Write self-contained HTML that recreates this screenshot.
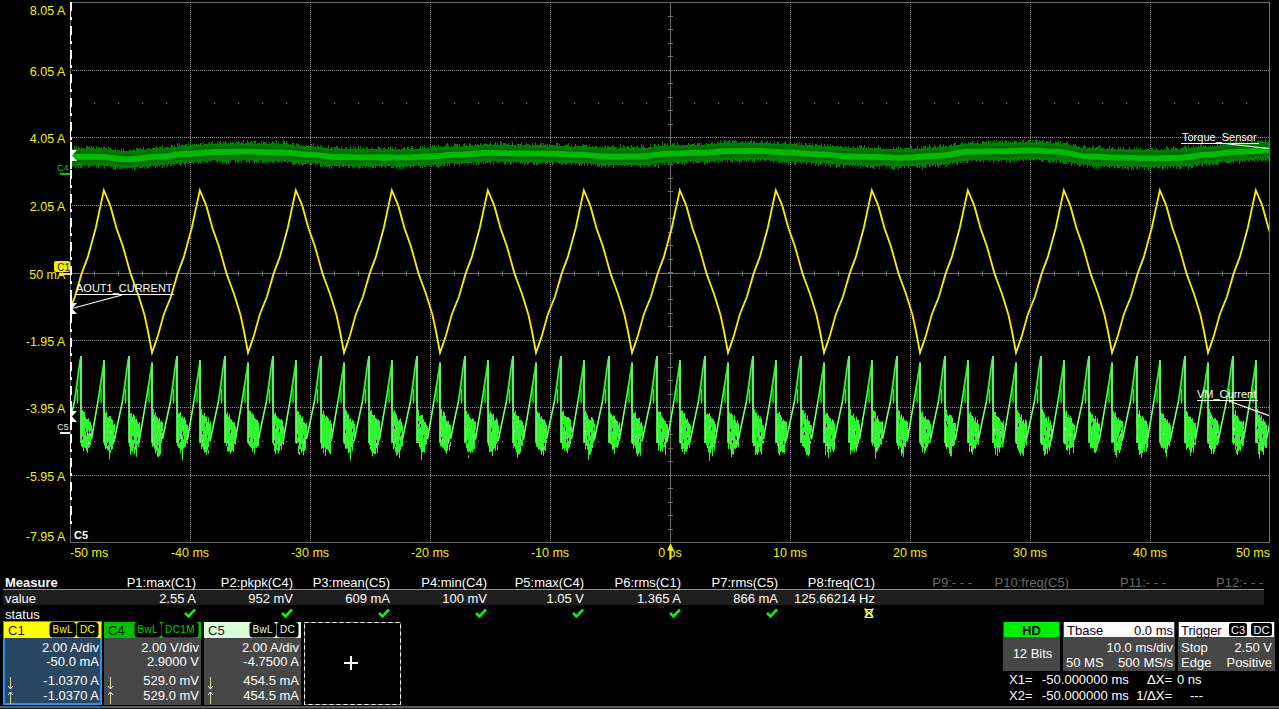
<!DOCTYPE html>
<html><head><meta charset="utf-8"><style>
html,body{margin:0;padding:0;background:#000;width:1279px;height:709px;overflow:hidden}
svg{display:block;font-family:"Liberation Sans", sans-serif}
</style></head><body>
<svg width="1279" height="709" viewBox="0 0 1279 709">
<g shape-rendering="crispEdges"><line x1="190.5" y1="2" x2="190.5" y2="542" stroke="#8c8c8c" stroke-dasharray="1 1"/><line x1="310.5" y1="2" x2="310.5" y2="542" stroke="#8c8c8c" stroke-dasharray="1 1"/><line x1="430.5" y1="2" x2="430.5" y2="542" stroke="#8c8c8c" stroke-dasharray="1 1"/><line x1="550.5" y1="2" x2="550.5" y2="542" stroke="#8c8c8c" stroke-dasharray="1 1"/><line x1="790.5" y1="2" x2="790.5" y2="542" stroke="#8c8c8c" stroke-dasharray="1 1"/><line x1="910.5" y1="2" x2="910.5" y2="542" stroke="#8c8c8c" stroke-dasharray="1 1"/><line x1="1030.5" y1="2" x2="1030.5" y2="542" stroke="#8c8c8c" stroke-dasharray="1 1"/><line x1="1150.5" y1="2" x2="1150.5" y2="542" stroke="#8c8c8c" stroke-dasharray="1 1"/><line x1="70" y1="70.5" x2="1269" y2="70.5" stroke="#8c8c8c" stroke-dasharray="1 1"/><line x1="70" y1="137.5" x2="1269" y2="137.5" stroke="#8c8c8c" stroke-dasharray="1 1"/><line x1="70" y1="205.5" x2="1269" y2="205.5" stroke="#8c8c8c" stroke-dasharray="1 1"/><line x1="70" y1="340.5" x2="1269" y2="340.5" stroke="#8c8c8c" stroke-dasharray="1 1"/><line x1="70" y1="407.5" x2="1269" y2="407.5" stroke="#8c8c8c" stroke-dasharray="1 1"/><line x1="70" y1="475.5" x2="1269" y2="475.5" stroke="#8c8c8c" stroke-dasharray="1 1"/><rect x="94" y="103" width="1" height="1" fill="#8c8c8c"/><rect x="118" y="103" width="1" height="1" fill="#8c8c8c"/><rect x="142" y="103" width="1" height="1" fill="#8c8c8c"/><rect x="166" y="103" width="1" height="1" fill="#8c8c8c"/><rect x="190" y="103" width="1" height="1" fill="#8c8c8c"/><rect x="214" y="103" width="1" height="1" fill="#8c8c8c"/><rect x="238" y="103" width="1" height="1" fill="#8c8c8c"/><rect x="262" y="103" width="1" height="1" fill="#8c8c8c"/><rect x="286" y="103" width="1" height="1" fill="#8c8c8c"/><rect x="310" y="103" width="1" height="1" fill="#8c8c8c"/><rect x="334" y="103" width="1" height="1" fill="#8c8c8c"/><rect x="358" y="103" width="1" height="1" fill="#8c8c8c"/><rect x="382" y="103" width="1" height="1" fill="#8c8c8c"/><rect x="406" y="103" width="1" height="1" fill="#8c8c8c"/><rect x="430" y="103" width="1" height="1" fill="#8c8c8c"/><rect x="454" y="103" width="1" height="1" fill="#8c8c8c"/><rect x="478" y="103" width="1" height="1" fill="#8c8c8c"/><rect x="502" y="103" width="1" height="1" fill="#8c8c8c"/><rect x="526" y="103" width="1" height="1" fill="#8c8c8c"/><rect x="550" y="103" width="1" height="1" fill="#8c8c8c"/><rect x="574" y="103" width="1" height="1" fill="#8c8c8c"/><rect x="598" y="103" width="1" height="1" fill="#8c8c8c"/><rect x="622" y="103" width="1" height="1" fill="#8c8c8c"/><rect x="646" y="103" width="1" height="1" fill="#8c8c8c"/><rect x="670" y="103" width="1" height="1" fill="#8c8c8c"/><rect x="694" y="103" width="1" height="1" fill="#8c8c8c"/><rect x="718" y="103" width="1" height="1" fill="#8c8c8c"/><rect x="742" y="103" width="1" height="1" fill="#8c8c8c"/><rect x="766" y="103" width="1" height="1" fill="#8c8c8c"/><rect x="790" y="103" width="1" height="1" fill="#8c8c8c"/><rect x="814" y="103" width="1" height="1" fill="#8c8c8c"/><rect x="838" y="103" width="1" height="1" fill="#8c8c8c"/><rect x="862" y="103" width="1" height="1" fill="#8c8c8c"/><rect x="886" y="103" width="1" height="1" fill="#8c8c8c"/><rect x="910" y="103" width="1" height="1" fill="#8c8c8c"/><rect x="934" y="103" width="1" height="1" fill="#8c8c8c"/><rect x="958" y="103" width="1" height="1" fill="#8c8c8c"/><rect x="982" y="103" width="1" height="1" fill="#8c8c8c"/><rect x="1006" y="103" width="1" height="1" fill="#8c8c8c"/><rect x="1030" y="103" width="1" height="1" fill="#8c8c8c"/><rect x="1054" y="103" width="1" height="1" fill="#8c8c8c"/><rect x="1078" y="103" width="1" height="1" fill="#8c8c8c"/><rect x="1102" y="103" width="1" height="1" fill="#8c8c8c"/><rect x="1126" y="103" width="1" height="1" fill="#8c8c8c"/><rect x="1150" y="103" width="1" height="1" fill="#8c8c8c"/><rect x="1174" y="103" width="1" height="1" fill="#8c8c8c"/><rect x="1198" y="103" width="1" height="1" fill="#8c8c8c"/><rect x="1222" y="103" width="1" height="1" fill="#8c8c8c"/><rect x="1246" y="103" width="1" height="1" fill="#8c8c8c"/><rect x="94" y="441" width="1" height="1" fill="#8c8c8c"/><rect x="118" y="441" width="1" height="1" fill="#8c8c8c"/><rect x="142" y="441" width="1" height="1" fill="#8c8c8c"/><rect x="166" y="441" width="1" height="1" fill="#8c8c8c"/><rect x="190" y="441" width="1" height="1" fill="#8c8c8c"/><rect x="214" y="441" width="1" height="1" fill="#8c8c8c"/><rect x="238" y="441" width="1" height="1" fill="#8c8c8c"/><rect x="262" y="441" width="1" height="1" fill="#8c8c8c"/><rect x="286" y="441" width="1" height="1" fill="#8c8c8c"/><rect x="310" y="441" width="1" height="1" fill="#8c8c8c"/><rect x="334" y="441" width="1" height="1" fill="#8c8c8c"/><rect x="358" y="441" width="1" height="1" fill="#8c8c8c"/><rect x="382" y="441" width="1" height="1" fill="#8c8c8c"/><rect x="406" y="441" width="1" height="1" fill="#8c8c8c"/><rect x="430" y="441" width="1" height="1" fill="#8c8c8c"/><rect x="454" y="441" width="1" height="1" fill="#8c8c8c"/><rect x="478" y="441" width="1" height="1" fill="#8c8c8c"/><rect x="502" y="441" width="1" height="1" fill="#8c8c8c"/><rect x="526" y="441" width="1" height="1" fill="#8c8c8c"/><rect x="550" y="441" width="1" height="1" fill="#8c8c8c"/><rect x="574" y="441" width="1" height="1" fill="#8c8c8c"/><rect x="598" y="441" width="1" height="1" fill="#8c8c8c"/><rect x="622" y="441" width="1" height="1" fill="#8c8c8c"/><rect x="646" y="441" width="1" height="1" fill="#8c8c8c"/><rect x="670" y="441" width="1" height="1" fill="#8c8c8c"/><rect x="694" y="441" width="1" height="1" fill="#8c8c8c"/><rect x="718" y="441" width="1" height="1" fill="#8c8c8c"/><rect x="742" y="441" width="1" height="1" fill="#8c8c8c"/><rect x="766" y="441" width="1" height="1" fill="#8c8c8c"/><rect x="790" y="441" width="1" height="1" fill="#8c8c8c"/><rect x="814" y="441" width="1" height="1" fill="#8c8c8c"/><rect x="838" y="441" width="1" height="1" fill="#8c8c8c"/><rect x="862" y="441" width="1" height="1" fill="#8c8c8c"/><rect x="886" y="441" width="1" height="1" fill="#8c8c8c"/><rect x="910" y="441" width="1" height="1" fill="#8c8c8c"/><rect x="934" y="441" width="1" height="1" fill="#8c8c8c"/><rect x="958" y="441" width="1" height="1" fill="#8c8c8c"/><rect x="982" y="441" width="1" height="1" fill="#8c8c8c"/><rect x="1006" y="441" width="1" height="1" fill="#8c8c8c"/><rect x="1030" y="441" width="1" height="1" fill="#8c8c8c"/><rect x="1054" y="441" width="1" height="1" fill="#8c8c8c"/><rect x="1078" y="441" width="1" height="1" fill="#8c8c8c"/><rect x="1102" y="441" width="1" height="1" fill="#8c8c8c"/><rect x="1126" y="441" width="1" height="1" fill="#8c8c8c"/><rect x="1150" y="441" width="1" height="1" fill="#8c8c8c"/><rect x="1174" y="441" width="1" height="1" fill="#8c8c8c"/><rect x="1198" y="441" width="1" height="1" fill="#8c8c8c"/><rect x="1222" y="441" width="1" height="1" fill="#8c8c8c"/><rect x="1246" y="441" width="1" height="1" fill="#8c8c8c"/><rect x="670" y="2" width="1" height="540" fill="#6e6e6e"/><rect x="70" y="273" width="1199" height="1" fill="#6e6e6e"/><rect x="94" y="271" width="1" height="5" fill="#6e6e6e"/><rect x="118" y="271" width="1" height="5" fill="#6e6e6e"/><rect x="142" y="271" width="1" height="5" fill="#6e6e6e"/><rect x="166" y="271" width="1" height="5" fill="#6e6e6e"/><rect x="190" y="271" width="1" height="5" fill="#6e6e6e"/><rect x="214" y="271" width="1" height="5" fill="#6e6e6e"/><rect x="238" y="271" width="1" height="5" fill="#6e6e6e"/><rect x="262" y="271" width="1" height="5" fill="#6e6e6e"/><rect x="286" y="271" width="1" height="5" fill="#6e6e6e"/><rect x="310" y="271" width="1" height="5" fill="#6e6e6e"/><rect x="334" y="271" width="1" height="5" fill="#6e6e6e"/><rect x="358" y="271" width="1" height="5" fill="#6e6e6e"/><rect x="382" y="271" width="1" height="5" fill="#6e6e6e"/><rect x="406" y="271" width="1" height="5" fill="#6e6e6e"/><rect x="430" y="271" width="1" height="5" fill="#6e6e6e"/><rect x="454" y="271" width="1" height="5" fill="#6e6e6e"/><rect x="478" y="271" width="1" height="5" fill="#6e6e6e"/><rect x="502" y="271" width="1" height="5" fill="#6e6e6e"/><rect x="526" y="271" width="1" height="5" fill="#6e6e6e"/><rect x="550" y="271" width="1" height="5" fill="#6e6e6e"/><rect x="574" y="271" width="1" height="5" fill="#6e6e6e"/><rect x="598" y="271" width="1" height="5" fill="#6e6e6e"/><rect x="622" y="271" width="1" height="5" fill="#6e6e6e"/><rect x="646" y="271" width="1" height="5" fill="#6e6e6e"/><rect x="670" y="271" width="1" height="5" fill="#6e6e6e"/><rect x="694" y="271" width="1" height="5" fill="#6e6e6e"/><rect x="718" y="271" width="1" height="5" fill="#6e6e6e"/><rect x="742" y="271" width="1" height="5" fill="#6e6e6e"/><rect x="766" y="271" width="1" height="5" fill="#6e6e6e"/><rect x="790" y="271" width="1" height="5" fill="#6e6e6e"/><rect x="814" y="271" width="1" height="5" fill="#6e6e6e"/><rect x="838" y="271" width="1" height="5" fill="#6e6e6e"/><rect x="862" y="271" width="1" height="5" fill="#6e6e6e"/><rect x="886" y="271" width="1" height="5" fill="#6e6e6e"/><rect x="910" y="271" width="1" height="5" fill="#6e6e6e"/><rect x="934" y="271" width="1" height="5" fill="#6e6e6e"/><rect x="958" y="271" width="1" height="5" fill="#6e6e6e"/><rect x="982" y="271" width="1" height="5" fill="#6e6e6e"/><rect x="1006" y="271" width="1" height="5" fill="#6e6e6e"/><rect x="1030" y="271" width="1" height="5" fill="#6e6e6e"/><rect x="1054" y="271" width="1" height="5" fill="#6e6e6e"/><rect x="1078" y="271" width="1" height="5" fill="#6e6e6e"/><rect x="1102" y="271" width="1" height="5" fill="#6e6e6e"/><rect x="1126" y="271" width="1" height="5" fill="#6e6e6e"/><rect x="1150" y="271" width="1" height="5" fill="#6e6e6e"/><rect x="1174" y="271" width="1" height="5" fill="#6e6e6e"/><rect x="1198" y="271" width="1" height="5" fill="#6e6e6e"/><rect x="1222" y="271" width="1" height="5" fill="#6e6e6e"/><rect x="1246" y="271" width="1" height="5" fill="#6e6e6e"/><rect x="668" y="16" width="5" height="1" fill="#6e6e6e"/><rect x="668" y="29" width="5" height="1" fill="#6e6e6e"/><rect x="668" y="43" width="5" height="1" fill="#6e6e6e"/><rect x="668" y="56" width="5" height="1" fill="#6e6e6e"/><rect x="668" y="70" width="5" height="1" fill="#6e6e6e"/><rect x="668" y="83" width="5" height="1" fill="#6e6e6e"/><rect x="668" y="97" width="5" height="1" fill="#6e6e6e"/><rect x="668" y="110" width="5" height="1" fill="#6e6e6e"/><rect x="668" y="124" width="5" height="1" fill="#6e6e6e"/><rect x="668" y="137" width="5" height="1" fill="#6e6e6e"/><rect x="668" y="151" width="5" height="1" fill="#6e6e6e"/><rect x="668" y="164" width="5" height="1" fill="#6e6e6e"/><rect x="668" y="178" width="5" height="1" fill="#6e6e6e"/><rect x="668" y="191" width="5" height="1" fill="#6e6e6e"/><rect x="668" y="205" width="5" height="1" fill="#6e6e6e"/><rect x="668" y="218" width="5" height="1" fill="#6e6e6e"/><rect x="668" y="232" width="5" height="1" fill="#6e6e6e"/><rect x="668" y="245" width="5" height="1" fill="#6e6e6e"/><rect x="668" y="259" width="5" height="1" fill="#6e6e6e"/><rect x="668" y="272" width="5" height="1" fill="#6e6e6e"/><rect x="668" y="286" width="5" height="1" fill="#6e6e6e"/><rect x="668" y="299" width="5" height="1" fill="#6e6e6e"/><rect x="668" y="313" width="5" height="1" fill="#6e6e6e"/><rect x="668" y="326" width="5" height="1" fill="#6e6e6e"/><rect x="668" y="340" width="5" height="1" fill="#6e6e6e"/><rect x="668" y="353" width="5" height="1" fill="#6e6e6e"/><rect x="668" y="367" width="5" height="1" fill="#6e6e6e"/><rect x="668" y="380" width="5" height="1" fill="#6e6e6e"/><rect x="668" y="394" width="5" height="1" fill="#6e6e6e"/><rect x="668" y="407" width="5" height="1" fill="#6e6e6e"/><rect x="668" y="421" width="5" height="1" fill="#6e6e6e"/><rect x="668" y="434" width="5" height="1" fill="#6e6e6e"/><rect x="668" y="448" width="5" height="1" fill="#6e6e6e"/><rect x="668" y="461" width="5" height="1" fill="#6e6e6e"/><rect x="668" y="475" width="5" height="1" fill="#6e6e6e"/><rect x="668" y="488" width="5" height="1" fill="#6e6e6e"/><rect x="668" y="502" width="5" height="1" fill="#6e6e6e"/><rect x="668" y="515" width="5" height="1" fill="#6e6e6e"/><rect x="668" y="529" width="5" height="1" fill="#6e6e6e"/><rect x="70" y="2" width="1200" height="1" fill="#6e6e6e"/><rect x="70" y="542" width="1200" height="1" fill="#6e6e6e"/><rect x="70" y="2" width="1" height="541" fill="#6e6e6e"/><rect x="1269" y="2" width="1" height="541" fill="#6e6e6e"/></g><polygon points="72,149 73,149 73,149 74,149 74,146 75,146 75,148 76,148 76,146 77,146 77,149 78,149 78,147 79,147 79,148 80,148 80,149 81,149 81,147 82,147 82,148 83,148 83,148 84,148 84,149 85,149 85,148 86,148 86,146 87,146 87,146 88,146 88,147 89,147 89,146 90,146 90,148 91,148 91,146 92,146 92,148 93,148 93,147 94,147 94,148 95,148 95,149 96,149 96,146 97,146 97,148 98,148 98,147 99,147 99,147 100,147 100,148 101,148 101,147 102,147 102,149 103,149 103,147 104,147 104,147 105,147 105,147 106,147 106,148 107,148 107,150 108,150 108,147 109,147 109,148 110,148 110,148 111,148 111,149 112,149 112,150 113,150 113,150 114,150 114,150 115,150 115,148 116,148 116,151 117,151 117,150 118,150 118,150 119,150 119,150 120,150 120,151 121,151 121,148 122,148 122,151 123,151 123,149 124,149 124,151 125,151 125,151 126,151 126,151 127,151 127,151 128,151 128,151 129,151 129,150 130,150 130,150 131,150 131,151 132,151 132,149 133,149 133,150 134,150 134,150 135,150 135,151 136,151 136,148 137,148 137,148 138,148 138,149 139,149 139,148 140,148 140,148 141,148 141,149 142,149 142,149 143,149 143,147 144,147 144,150 145,150 145,149 146,149 146,150 147,150 147,148 148,148 148,148 149,148 149,148 150,148 150,149 151,149 151,149 152,149 152,148 153,148 153,148 154,148 154,148 155,148 155,147 156,147 156,146 157,146 157,148 158,148 158,148 159,148 159,147 160,147 160,147 161,147 161,147 162,147 162,145 163,145 163,149 164,149 164,148 165,148 165,147 166,147 166,147 167,147 167,147 168,147 168,147 169,147 169,148 170,148 170,147 171,147 171,145 172,145 172,145 173,145 173,147 174,147 174,145 175,145 175,147 176,147 176,147 177,147 177,143 178,143 178,146 179,146 179,143 180,143 180,146 181,146 181,145 182,145 182,144 183,144 183,145 184,145 184,145 185,145 185,144 186,144 186,144 187,144 187,146 188,146 188,143 189,143 189,146 190,146 190,142 191,142 191,145 192,145 192,144 193,144 193,145 194,145 194,144 195,144 195,145 196,145 196,144 197,144 197,145 198,145 198,144 199,144 199,145 200,145 200,143 201,143 201,143 202,143 202,145 203,145 203,142 204,142 204,144 205,144 205,144 206,144 206,144 207,144 207,144 208,144 208,143 209,143 209,142 210,142 210,144 211,144 211,142 212,142 212,141 213,141 213,144 214,144 214,144 215,144 215,143 216,143 216,144 217,144 217,141 218,141 218,144 219,144 219,142 220,142 220,141 221,141 221,143 222,143 222,144 223,144 223,141 224,141 224,143 225,143 225,141 226,141 226,142 227,142 227,144 228,144 228,143 229,143 229,144 230,144 230,141 231,141 231,143 232,143 232,142 233,142 233,142 234,142 234,144 235,144 235,143 236,143 236,142 237,142 237,142 238,142 238,141 239,141 239,142 240,142 240,143 241,143 241,141 242,141 242,143 243,143 243,140 244,140 244,144 245,144 245,143 246,143 246,143 247,143 247,140 248,140 248,142 249,142 249,143 250,143 250,142 251,142 251,141 252,141 252,142 253,142 253,144 254,144 254,141 255,141 255,141 256,141 256,144 257,144 257,143 258,143 258,143 259,143 259,142 260,142 260,144 261,144 261,141 262,141 262,144 263,144 263,141 264,141 264,142 265,142 265,142 266,142 266,143 267,143 267,144 268,144 268,144 269,144 269,142 270,142 270,144 271,144 271,143 272,143 272,141 273,141 273,142 274,142 274,143 275,143 275,144 276,144 276,140 277,140 277,144 278,144 278,142 279,142 279,144 280,144 280,144 281,144 281,144 282,144 282,144 283,144 283,140 284,140 284,141 285,141 285,143 286,143 286,141 287,141 287,143 288,143 288,144 289,144 289,145 290,145 290,144 291,144 291,145 292,145 292,143 293,143 293,143 294,143 294,145 295,145 295,146 296,146 296,143 297,143 297,144 298,144 298,144 299,144 299,145 300,145 300,146 301,146 301,145 302,145 302,146 303,146 303,145 304,145 304,146 305,146 305,147 306,147 306,145 307,145 307,146 308,146 308,145 309,145 309,146 310,146 310,147 311,147 311,144 312,144 312,146 313,146 313,143 314,143 314,147 315,147 315,146 316,146 316,147 317,147 317,145 318,145 318,146 319,146 319,147 320,147 320,145 321,145 321,147 322,147 322,146 323,146 323,148 324,148 324,148 325,148 325,147 326,147 326,148 327,148 327,148 328,148 328,145 329,145 329,149 330,149 330,149 331,149 331,147 332,147 332,147 333,147 333,149 334,149 334,147 335,147 335,147 336,147 336,146 337,146 337,146 338,146 338,148 339,148 339,148 340,148 340,149 341,149 341,146 342,146 342,148 343,148 343,149 344,149 344,149 345,149 345,147 346,147 346,147 347,147 347,149 348,149 348,149 349,149 349,149 350,149 350,146 351,146 351,149 352,149 352,149 353,149 353,146 354,146 354,148 355,148 355,147 356,147 356,149 357,149 357,149 358,149 358,146 359,146 359,149 360,149 360,146 361,146 361,149 362,149 362,148 363,148 363,149 364,149 364,148 365,148 365,149 366,149 366,147 367,147 367,147 368,147 368,149 369,149 369,149 370,149 370,149 371,149 371,148 372,148 372,147 373,147 373,149 374,149 374,149 375,149 375,149 376,149 376,149 377,149 377,149 378,149 378,146 379,146 379,147 380,147 380,148 381,148 381,149 382,149 382,150 383,150 383,148 384,148 384,147 385,147 385,149 386,149 386,149 387,149 387,149 388,149 388,147 389,147 389,149 390,149 390,146 391,146 391,148 392,148 392,147 393,147 393,149 394,149 394,149 395,149 395,147 396,147 396,150 397,150 397,148 398,148 398,149 399,149 399,149 400,149 400,150 401,150 401,148 402,148 402,149 403,149 403,148 404,148 404,147 405,147 405,149 406,149 406,148 407,148 407,147 408,147 408,147 409,147 409,149 410,149 410,148 411,148 411,146 412,146 412,146 413,146 413,148 414,148 414,149 415,149 415,149 416,149 416,149 417,149 417,149 418,149 418,149 419,149 419,148 420,148 420,146 421,146 421,149 422,149 422,146 423,146 423,148 424,148 424,145 425,145 425,148 426,148 426,148 427,148 427,148 428,148 428,147 429,147 429,149 430,149 430,147 431,147 431,147 432,147 432,145 433,145 433,146 434,146 434,145 435,145 435,147 436,147 436,146 437,146 437,148 438,148 438,145 439,145 439,147 440,147 440,146 441,146 441,147 442,147 442,147 443,147 443,147 444,147 444,146 445,146 445,146 446,146 446,144 447,144 447,143 448,143 448,145 449,145 449,147 450,147 450,147 451,147 451,145 452,145 452,147 453,147 453,146 454,146 454,143 455,143 455,144 456,144 456,144 457,144 457,144 458,144 458,146 459,146 459,144 460,144 460,146 461,146 461,147 462,147 462,146 463,146 463,144 464,144 464,143 465,143 465,146 466,146 466,145 467,145 467,146 468,146 468,146 469,146 469,143 470,143 470,144 471,144 471,145 472,145 472,145 473,145 473,146 474,146 474,145 475,145 475,144 476,144 476,145 477,145 477,144 478,144 478,145 479,145 479,145 480,145 480,143 481,143 481,144 482,144 482,145 483,145 483,144 484,144 484,144 485,144 485,143 486,143 486,144 487,144 487,144 488,144 488,145 489,145 489,144 490,144 490,142 491,142 491,144 492,144 492,145 493,145 493,145 494,145 494,144 495,144 495,142 496,142 496,145 497,145 497,143 498,143 498,145 499,145 499,145 500,145 500,141 501,141 501,142 502,142 502,145 503,145 503,143 504,143 504,143 505,143 505,143 506,143 506,144 507,144 507,144 508,144 508,143 509,143 509,145 510,145 510,145 511,145 511,145 512,145 512,142 513,142 513,145 514,145 514,145 515,145 515,145 516,145 516,146 517,146 517,144 518,144 518,144 519,144 519,144 520,144 520,144 521,144 521,143 522,143 522,145 523,145 523,146 524,146 524,145 525,145 525,145 526,145 526,143 527,143 527,144 528,144 528,144 529,144 529,145 530,145 530,145 531,145 531,146 532,146 532,143 533,143 533,145 534,145 534,145 535,145 535,142 536,142 536,145 537,145 537,145 538,145 538,145 539,145 539,145 540,145 540,143 541,143 541,143 542,143 542,145 543,145 543,143 544,143 544,145 545,145 545,144 546,144 546,145 547,145 547,144 548,144 548,146 549,146 549,144 550,144 550,144 551,144 551,145 552,145 552,145 553,145 553,145 554,145 554,145 555,145 555,146 556,146 556,143 557,143 557,143 558,143 558,146 559,146 559,144 560,144 560,146 561,146 561,146 562,146 562,146 563,146 563,146 564,146 564,146 565,146 565,145 566,145 566,144 567,144 567,145 568,145 568,143 569,143 569,146 570,146 570,147 571,147 571,145 572,145 572,147 573,147 573,147 574,147 574,146 575,146 575,144 576,144 576,146 577,146 577,146 578,146 578,145 579,145 579,146 580,146 580,146 581,146 581,146 582,146 582,145 583,145 583,144 584,144 584,145 585,145 585,145 586,145 586,145 587,145 587,146 588,146 588,147 589,147 589,145 590,145 590,147 591,147 591,147 592,147 592,146 593,146 593,147 594,147 594,147 595,147 595,146 596,146 596,146 597,146 597,147 598,147 598,148 599,148 599,147 600,147 600,147 601,147 601,148 602,148 602,147 603,147 603,148 604,148 604,146 605,146 605,145 606,145 606,148 607,148 607,146 608,146 608,146 609,146 609,147 610,147 610,147 611,147 611,146 612,146 612,146 613,146 613,145 614,145 614,147 615,147 615,147 616,147 616,147 617,147 617,149 618,149 618,148 619,148 619,148 620,148 620,144 621,144 621,148 622,148 622,148 623,148 623,145 624,145 624,146 625,146 625,148 626,148 626,147 627,147 627,146 628,146 628,146 629,146 629,148 630,148 630,148 631,148 631,145 632,145 632,147 633,147 633,147 634,147 634,146 635,146 635,148 636,148 636,146 637,146 637,146 638,146 638,148 639,148 639,148 640,148 640,148 641,148 641,144 642,144 642,147 643,147 643,145 644,145 644,147 645,147 645,148 646,148 646,148 647,148 647,148 648,148 648,147 649,147 649,147 650,147 650,144 651,144 651,147 652,147 652,147 653,147 653,147 654,147 654,144 655,144 655,144 656,144 656,145 657,145 657,147 658,147 658,144 659,144 659,146 660,146 660,146 661,146 661,146 662,146 662,142 663,142 663,146 664,146 664,143 665,143 665,144 666,144 666,145 667,145 667,143 668,143 668,146 669,146 669,146 670,146 670,144 671,144 671,145 672,145 672,143 673,143 673,144 674,144 674,143 675,143 675,145 676,145 676,145 677,145 677,142 678,142 678,145 679,145 679,145 680,145 680,146 681,146 681,145 682,145 682,145 683,145 683,145 684,145 684,145 685,145 685,145 686,145 686,145 687,145 687,145 688,145 688,143 689,143 689,144 690,144 690,145 691,145 691,144 692,144 692,144 693,144 693,144 694,144 694,143 695,143 695,145 696,145 696,145 697,145 697,143 698,143 698,143 699,143 699,143 700,143 700,145 701,145 701,143 702,143 702,145 703,145 703,145 704,145 704,144 705,144 705,145 706,145 706,143 707,143 707,144 708,144 708,144 709,144 709,144 710,144 710,144 711,144 711,142 712,142 712,142 713,142 713,144 714,144 714,143 715,143 715,144 716,144 716,144 717,144 717,142 718,142 718,142 719,142 719,143 720,143 720,140 721,140 721,143 722,143 722,143 723,143 723,143 724,143 724,140 725,140 725,140 726,140 726,142 727,142 727,141 728,141 728,141 729,141 729,140 730,140 730,143 731,143 731,143 732,143 732,140 733,140 733,141 734,141 734,141 735,141 735,140 736,140 736,141 737,141 737,143 738,143 738,143 739,143 739,143 740,143 740,142 741,142 741,141 742,141 742,142 743,142 743,142 744,142 744,143 745,143 745,141 746,141 746,143 747,143 747,142 748,142 748,142 749,142 749,143 750,143 750,141 751,141 751,139 752,139 752,143 753,143 753,141 754,141 754,141 755,141 755,142 756,142 756,143 757,143 757,143 758,143 758,143 759,143 759,143 760,143 760,142 761,142 761,140 762,140 762,142 763,142 763,143 764,143 764,143 765,143 765,142 766,142 766,142 767,142 767,141 768,141 768,143 769,143 769,143 770,143 770,142 771,142 771,144 772,144 772,144 773,144 773,143 774,143 774,141 775,141 775,144 776,144 776,144 777,144 777,141 778,141 778,142 779,142 779,144 780,144 780,144 781,144 781,144 782,144 782,143 783,143 783,143 784,143 784,142 785,142 785,141 786,141 786,144 787,144 787,144 788,144 788,144 789,144 789,143 790,143 790,143 791,143 791,144 792,144 792,144 793,144 793,144 794,144 794,143 795,143 795,144 796,144 796,143 797,143 797,143 798,143 798,145 799,145 799,142 800,142 800,145 801,145 801,143 802,143 802,145 803,145 803,145 804,145 804,146 805,146 805,143 806,143 806,143 807,143 807,145 808,145 808,145 809,145 809,143 810,143 810,145 811,145 811,145 812,145 812,143 813,143 813,145 814,145 814,146 815,146 815,144 816,144 816,144 817,144 817,145 818,145 818,146 819,146 819,145 820,145 820,145 821,145 821,143 822,143 822,147 823,147 823,146 824,146 824,144 825,144 825,146 826,146 826,146 827,146 827,144 828,144 828,146 829,146 829,147 830,147 830,144 831,144 831,147 832,147 832,145 833,145 833,146 834,146 834,147 835,147 835,146 836,146 836,146 837,146 837,146 838,146 838,146 839,146 839,147 840,147 840,146 841,146 841,146 842,146 842,147 843,147 843,148 844,148 844,147 845,147 845,147 846,147 846,146 847,146 847,148 848,148 848,146 849,146 849,148 850,148 850,148 851,148 851,148 852,148 852,148 853,148 853,146 854,146 854,148 855,148 855,148 856,148 856,148 857,148 857,146 858,146 858,148 859,148 859,145 860,145 860,146 861,146 861,145 862,145 862,148 863,148 863,147 864,147 864,145 865,145 865,149 866,149 866,147 867,147 867,149 868,149 868,147 869,147 869,148 870,148 870,148 871,148 871,148 872,148 872,148 873,148 873,149 874,149 874,147 875,147 875,148 876,148 876,148 877,148 877,148 878,148 878,145 879,145 879,148 880,148 880,147 881,147 881,149 882,149 882,149 883,149 883,148 884,148 884,149 885,149 885,149 886,149 886,148 887,148 887,149 888,149 888,149 889,149 889,149 890,149 890,149 891,149 891,149 892,149 892,149 893,149 893,147 894,147 894,149 895,149 895,149 896,149 896,147 897,147 897,149 898,149 898,146 899,146 899,150 900,150 900,147 901,147 901,148 902,148 902,150 903,150 903,149 904,149 904,148 905,148 905,148 906,148 906,148 907,148 907,148 908,148 908,148 909,148 909,148 910,148 910,147 911,147 911,146 912,146 912,149 913,149 913,149 914,149 914,149 915,149 915,148 916,148 916,149 917,149 917,146 918,146 918,149 919,149 919,148 920,148 920,149 921,149 921,146 922,146 922,148 923,148 923,146 924,146 924,146 925,146 925,146 926,146 926,148 927,148 927,147 928,147 928,147 929,147 929,144 930,144 930,146 931,146 931,148 932,148 932,148 933,148 933,147 934,147 934,145 935,145 935,146 936,146 936,148 937,148 937,147 938,147 938,147 939,147 939,145 940,145 940,144 941,144 941,147 942,147 942,146 943,146 943,144 944,144 944,147 945,147 945,146 946,146 946,146 947,146 947,147 948,147 948,146 949,146 949,145 950,145 950,145 951,145 951,144 952,144 952,146 953,146 953,144 954,144 954,143 955,143 955,142 956,142 956,145 957,145 957,145 958,145 958,145 959,145 959,145 960,145 960,144 961,144 961,143 962,143 962,142 963,142 963,144 964,144 964,143 965,143 965,143 966,143 966,144 967,144 967,144 968,144 968,142 969,142 969,143 970,143 970,142 971,142 971,142 972,142 972,142 973,142 973,141 974,141 974,144 975,144 975,143 976,143 976,143 977,143 977,141 978,141 978,143 979,143 979,144 980,144 980,143 981,143 981,144 982,144 982,141 983,141 983,141 984,141 984,142 985,142 985,142 986,142 986,141 987,141 987,144 988,144 988,140 989,140 989,142 990,142 990,141 991,141 991,144 992,144 992,142 993,142 993,141 994,141 994,140 995,140 995,143 996,143 996,140 997,140 997,143 998,143 998,142 999,142 999,141 1000,141 1000,141 1001,141 1001,143 1002,143 1002,140 1003,140 1003,143 1004,143 1004,143 1005,143 1005,140 1006,140 1006,140 1007,140 1007,143 1008,143 1008,141 1009,141 1009,143 1010,143 1010,141 1011,141 1011,143 1012,143 1012,142 1013,142 1013,143 1014,143 1014,140 1015,140 1015,141 1016,141 1016,141 1017,141 1017,143 1018,143 1018,142 1019,142 1019,142 1020,142 1020,142 1021,142 1021,142 1022,142 1022,140 1023,140 1023,140 1024,140 1024,143 1025,143 1025,142 1026,142 1026,142 1027,142 1027,141 1028,141 1028,140 1029,140 1029,140 1030,140 1030,142 1031,142 1031,142 1032,142 1032,140 1033,140 1033,142 1034,142 1034,143 1035,143 1035,140 1036,140 1036,139 1037,139 1037,140 1038,140 1038,142 1039,142 1039,140 1040,140 1040,141 1041,141 1041,141 1042,141 1042,140 1043,140 1043,140 1044,140 1044,143 1045,143 1045,142 1046,142 1046,141 1047,141 1047,141 1048,141 1048,141 1049,141 1049,142 1050,142 1050,140 1051,140 1051,144 1052,144 1052,143 1053,143 1053,143 1054,143 1054,144 1055,144 1055,141 1056,141 1056,142 1057,142 1057,142 1058,142 1058,140 1059,140 1059,144 1060,144 1060,141 1061,141 1061,144 1062,144 1062,144 1063,144 1063,143 1064,143 1064,143 1065,143 1065,143 1066,143 1066,142 1067,142 1067,142 1068,142 1068,144 1069,144 1069,145 1070,145 1070,145 1071,145 1071,146 1072,146 1072,146 1073,146 1073,144 1074,144 1074,145 1075,145 1075,144 1076,144 1076,146 1077,146 1077,147 1078,147 1078,146 1079,146 1079,147 1080,147 1080,148 1081,148 1081,148 1082,148 1082,148 1083,148 1083,146 1084,146 1084,145 1085,145 1085,146 1086,146 1086,149 1087,149 1087,148 1088,148 1088,148 1089,148 1089,147 1090,147 1090,148 1091,148 1091,148 1092,148 1092,147 1093,147 1093,145 1094,145 1094,148 1095,148 1095,148 1096,148 1096,147 1097,147 1097,147 1098,147 1098,146 1099,146 1099,145 1100,145 1100,146 1101,146 1101,149 1102,149 1102,148 1103,148 1103,148 1104,148 1104,149 1105,149 1105,149 1106,149 1106,149 1107,149 1107,148 1108,148 1108,149 1109,149 1109,146 1110,146 1110,149 1111,149 1111,148 1112,148 1112,147 1113,147 1113,148 1114,148 1114,149 1115,149 1115,149 1116,149 1116,150 1117,150 1117,149 1118,149 1118,147 1119,147 1119,149 1120,149 1120,147 1121,147 1121,149 1122,149 1122,149 1123,149 1123,146 1124,146 1124,149 1125,149 1125,150 1126,150 1126,149 1127,149 1127,150 1128,150 1128,149 1129,149 1129,147 1130,147 1130,149 1131,149 1131,149 1132,149 1132,150 1133,150 1133,149 1134,149 1134,148 1135,148 1135,150 1136,150 1136,147 1137,147 1137,150 1138,150 1138,148 1139,148 1139,150 1140,150 1140,148 1141,148 1141,150 1142,150 1142,150 1143,150 1143,150 1144,150 1144,150 1145,150 1145,149 1146,149 1146,150 1147,150 1147,149 1148,149 1148,149 1149,149 1149,150 1150,150 1150,150 1151,150 1151,148 1152,148 1152,148 1153,148 1153,150 1154,150 1154,149 1155,149 1155,150 1156,150 1156,148 1157,148 1157,149 1158,149 1158,150 1159,150 1159,150 1160,150 1160,150 1161,150 1161,149 1162,149 1162,150 1163,150 1163,150 1164,150 1164,149 1165,149 1165,150 1166,150 1166,146 1167,146 1167,147 1168,147 1168,148 1169,148 1169,150 1170,150 1170,150 1171,150 1171,148 1172,148 1172,148 1173,148 1173,146 1174,146 1174,149 1175,149 1175,147 1176,147 1176,148 1177,148 1177,148 1178,148 1178,150 1179,150 1179,149 1180,149 1180,149 1181,149 1181,148 1182,148 1182,148 1183,148 1183,147 1184,147 1184,146 1185,146 1185,145 1186,145 1186,147 1187,147 1187,149 1188,149 1188,145 1189,145 1189,148 1190,148 1190,148 1191,148 1191,147 1192,147 1192,148 1193,148 1193,145 1194,145 1194,148 1195,148 1195,146 1196,146 1196,147 1197,147 1197,147 1198,147 1198,145 1199,145 1199,147 1200,147 1200,143 1201,143 1201,144 1202,144 1202,147 1203,147 1203,145 1204,145 1204,147 1205,147 1205,145 1206,145 1206,146 1207,146 1207,147 1208,147 1208,146 1209,146 1209,147 1210,147 1210,146 1211,146 1211,147 1212,147 1212,145 1213,145 1213,147 1214,147 1214,146 1215,146 1215,146 1216,146 1216,146 1217,146 1217,144 1218,144 1218,146 1219,146 1219,145 1220,145 1220,143 1221,143 1221,145 1222,145 1222,144 1223,144 1223,143 1224,143 1224,145 1225,145 1225,142 1226,142 1226,145 1227,145 1227,145 1228,145 1228,142 1229,142 1229,144 1230,144 1230,141 1231,141 1231,144 1232,144 1232,143 1233,143 1233,142 1234,142 1234,144 1235,144 1235,140 1236,140 1236,141 1237,141 1237,142 1238,142 1238,143 1239,143 1239,142 1240,142 1240,140 1241,140 1241,142 1242,142 1242,144 1243,144 1243,142 1244,142 1244,143 1245,143 1245,143 1246,143 1246,143 1247,143 1247,139 1248,139 1248,143 1249,143 1249,143 1250,143 1250,143 1251,143 1251,141 1252,141 1252,140 1253,140 1253,142 1254,142 1254,142 1255,142 1255,142 1256,142 1256,143 1257,143 1257,141 1258,141 1258,140 1259,140 1259,141 1260,141 1260,141 1261,141 1261,140 1262,140 1262,141 1263,141 1263,142 1264,142 1264,142 1265,142 1265,139 1266,139 1266,142 1267,142 1267,142 1268,142 1268,140 1269,140 1269,161 1268,161 1268,159 1267,159 1267,161 1266,161 1266,161 1265,161 1265,158 1264,158 1264,160 1263,160 1263,161 1262,161 1262,161 1261,161 1261,159 1260,159 1260,160 1259,160 1259,159 1258,159 1258,162 1257,162 1257,159 1256,159 1256,159 1255,159 1255,162 1254,162 1254,160 1253,160 1253,161 1252,161 1252,160 1251,160 1251,160 1250,160 1250,161 1249,161 1249,162 1248,162 1248,160 1247,160 1247,160 1246,160 1246,161 1245,161 1245,162 1244,162 1244,161 1243,161 1243,162 1242,162 1242,160 1241,160 1241,162 1240,162 1240,164 1239,164 1239,160 1238,160 1238,161 1237,161 1237,161 1236,161 1236,161 1235,161 1235,161 1234,161 1234,164 1233,164 1233,162 1232,162 1232,162 1231,162 1231,163 1230,163 1230,163 1229,163 1229,163 1228,163 1228,164 1227,164 1227,163 1226,163 1226,162 1225,162 1225,162 1224,162 1224,161 1223,161 1223,162 1222,162 1222,162 1221,162 1221,162 1220,162 1220,162 1219,162 1219,165 1218,165 1218,165 1217,165 1217,165 1216,165 1216,165 1215,165 1215,164 1214,164 1214,166 1213,166 1213,165 1212,165 1212,163 1211,163 1211,165 1210,165 1210,166 1209,166 1209,165 1208,165 1208,163 1207,163 1207,166 1206,166 1206,164 1205,164 1205,164 1204,164 1204,163 1203,163 1203,166 1202,166 1202,166 1201,166 1201,163 1200,163 1200,165 1199,165 1199,165 1198,165 1198,166 1197,166 1197,167 1196,167 1196,165 1195,165 1195,164 1194,164 1194,167 1193,167 1193,168 1192,168 1192,168 1191,168 1191,167 1190,167 1190,166 1189,166 1189,170 1188,170 1188,166 1187,166 1187,167 1186,167 1186,167 1185,167 1185,166 1184,166 1184,167 1183,167 1183,166 1182,166 1182,168 1181,168 1181,169 1180,169 1180,169 1179,169 1179,167 1178,167 1178,167 1177,167 1177,169 1176,169 1176,166 1175,166 1175,166 1174,166 1174,168 1173,168 1173,167 1172,167 1172,166 1171,166 1171,168 1170,168 1170,166 1169,166 1169,167 1168,167 1168,169 1167,169 1167,166 1166,166 1166,169 1165,169 1165,168 1164,168 1164,169 1163,169 1163,170 1162,170 1162,166 1161,166 1161,167 1160,167 1160,168 1159,168 1159,169 1158,169 1158,168 1157,168 1157,167 1156,167 1156,167 1155,167 1155,168 1154,168 1154,168 1153,168 1153,167 1152,167 1152,168 1151,168 1151,168 1150,168 1150,167 1149,167 1149,171 1148,171 1148,169 1147,169 1147,167 1146,167 1146,167 1145,167 1145,170 1144,170 1144,167 1143,167 1143,168 1142,168 1142,167 1141,167 1141,167 1140,167 1140,169 1139,169 1139,166 1138,166 1138,170 1137,170 1137,169 1136,169 1136,167 1135,167 1135,166 1134,166 1134,170 1133,170 1133,168 1132,168 1132,170 1131,170 1131,167 1130,167 1130,167 1129,167 1129,170 1128,170 1128,169 1127,169 1127,166 1126,166 1126,169 1125,169 1125,168 1124,168 1124,166 1123,166 1123,169 1122,169 1122,166 1121,166 1121,167 1120,167 1120,168 1119,168 1119,168 1118,168 1118,168 1117,168 1117,166 1116,166 1116,168 1115,168 1115,169 1114,169 1114,166 1113,166 1113,166 1112,166 1112,167 1111,167 1111,166 1110,166 1110,168 1109,168 1109,167 1108,167 1108,167 1107,167 1107,166 1106,166 1106,166 1105,166 1105,167 1104,167 1104,167 1103,167 1103,166 1102,166 1102,166 1101,166 1101,169 1100,169 1100,166 1099,166 1099,168 1098,168 1098,166 1097,166 1097,169 1096,169 1096,166 1095,166 1095,167 1094,167 1094,168 1093,168 1093,167 1092,167 1092,165 1091,165 1091,166 1090,166 1090,166 1089,166 1089,165 1088,165 1088,168 1087,168 1087,165 1086,165 1086,165 1085,165 1085,165 1084,165 1084,166 1083,166 1083,164 1082,164 1082,165 1081,165 1081,166 1080,166 1080,167 1079,167 1079,165 1078,165 1078,165 1077,165 1077,163 1076,163 1076,163 1075,163 1075,164 1074,164 1074,163 1073,163 1073,164 1072,164 1072,166 1071,166 1071,162 1070,162 1070,162 1069,162 1069,164 1068,164 1068,161 1067,161 1067,164 1066,164 1066,164 1065,164 1065,164 1064,164 1064,164 1063,164 1063,163 1062,163 1062,161 1061,161 1061,163 1060,163 1060,161 1059,161 1059,160 1058,160 1058,160 1057,160 1057,163 1056,163 1056,160 1055,160 1055,161 1054,161 1054,162 1053,162 1053,163 1052,163 1052,160 1051,160 1051,163 1050,163 1050,163 1049,163 1049,162 1048,162 1048,160 1047,160 1047,160 1046,160 1046,160 1045,160 1045,160 1044,160 1044,161 1043,161 1043,162 1042,162 1042,162 1041,162 1041,160 1040,160 1040,160 1039,160 1039,159 1038,159 1038,159 1037,159 1037,160 1036,160 1036,159 1035,159 1035,160 1034,160 1034,161 1033,161 1033,160 1032,160 1032,160 1031,160 1031,161 1030,161 1030,160 1029,160 1029,160 1028,160 1028,159 1027,159 1027,161 1026,161 1026,160 1025,160 1025,159 1024,159 1024,162 1023,162 1023,160 1022,160 1022,160 1021,160 1021,159 1020,159 1020,161 1019,161 1019,160 1018,160 1018,161 1017,161 1017,161 1016,161 1016,159 1015,159 1015,162 1014,162 1014,160 1013,160 1013,161 1012,161 1012,160 1011,160 1011,163 1010,163 1010,162 1009,162 1009,160 1008,160 1008,160 1007,160 1007,163 1006,163 1006,160 1005,160 1005,160 1004,160 1004,160 1003,160 1003,160 1002,160 1002,161 1001,161 1001,160 1000,160 1000,162 999,162 999,161 998,161 998,160 997,160 997,161 996,161 996,160 995,160 995,161 994,161 994,163 993,163 993,160 992,160 992,160 991,160 991,161 990,161 990,161 989,161 989,161 988,161 988,160 987,160 987,160 986,160 986,161 985,161 985,160 984,160 984,163 983,163 983,160 982,160 982,161 981,161 981,162 980,162 980,162 979,162 979,160 978,160 978,161 977,161 977,162 976,162 976,161 975,161 975,160 974,160 974,160 973,160 973,161 972,161 972,161 971,161 971,160 970,160 970,160 969,160 969,161 968,161 968,163 967,163 967,163 966,163 966,161 965,161 965,161 964,161 964,163 963,163 963,161 962,161 962,161 961,161 961,163 960,163 960,161 959,161 959,162 958,162 958,165 957,165 957,164 956,164 956,162 955,162 955,163 954,163 954,163 953,163 953,164 952,164 952,162 951,162 951,163 950,163 950,164 949,164 949,165 948,165 948,164 947,164 947,167 946,167 946,164 945,164 945,165 944,165 944,165 943,165 943,164 942,164 942,165 941,165 941,166 940,166 940,166 939,166 939,168 938,168 938,166 937,166 937,164 936,164 936,167 935,167 935,164 934,164 934,165 933,165 933,166 932,166 932,165 931,165 931,167 930,167 930,167 929,167 929,164 928,164 928,164 927,164 927,165 926,165 926,168 925,168 925,168 924,168 924,167 923,167 923,170 922,170 922,167 921,167 921,166 920,166 920,168 919,168 919,165 918,165 918,168 917,168 917,167 916,167 916,166 915,166 915,166 914,166 914,166 913,166 913,166 912,166 912,166 911,166 911,167 910,167 910,166 909,166 909,168 908,168 908,166 907,166 907,166 906,166 906,166 905,166 905,168 904,168 904,166 903,166 903,166 902,166 902,167 901,167 901,168 900,168 900,168 899,168 899,170 898,170 898,166 897,166 897,168 896,168 896,167 895,167 895,170 894,170 894,170 893,170 893,169 892,169 892,169 891,169 891,166 890,166 890,167 889,167 889,166 888,166 888,166 887,166 887,169 886,169 886,166 885,166 885,165 884,165 884,165 883,165 883,166 882,166 882,166 881,166 881,166 880,166 880,169 879,169 879,166 878,166 878,167 877,167 877,166 876,166 876,166 875,166 875,167 874,167 874,169 873,169 873,168 872,168 872,167 871,167 871,168 870,168 870,165 869,165 869,166 868,166 868,168 867,168 867,167 866,167 866,167 865,167 865,165 864,165 864,167 863,167 863,166 862,166 862,166 861,166 861,169 860,169 860,165 859,165 859,166 858,166 858,167 857,167 857,165 856,165 856,166 855,166 855,166 854,166 854,165 853,165 853,167 852,167 852,166 851,166 851,165 850,165 850,166 849,166 849,165 848,165 848,165 847,165 847,165 846,165 846,166 845,166 845,166 844,166 844,169 843,169 843,164 842,164 842,164 841,164 841,165 840,165 840,167 839,167 839,167 838,167 838,167 837,167 837,168 836,168 836,164 835,164 835,164 834,164 834,164 833,164 833,165 832,165 832,164 831,164 831,167 830,167 830,163 829,163 829,166 828,166 828,164 827,164 827,164 826,164 826,166 825,166 825,163 824,163 824,163 823,163 823,164 822,164 822,165 821,165 821,165 820,165 820,164 819,164 819,166 818,166 818,162 817,162 817,164 816,164 816,166 815,166 815,163 814,163 814,164 813,164 813,163 812,163 812,165 811,165 811,162 810,162 810,163 809,163 809,162 808,162 808,163 807,163 807,165 806,165 806,162 805,162 805,162 804,162 804,164 803,164 803,162 802,162 802,164 801,164 801,163 800,163 800,161 799,161 799,163 798,163 798,162 797,162 797,162 796,162 796,165 795,165 795,165 794,165 794,161 793,161 793,161 792,161 792,161 791,161 791,161 790,161 790,161 789,161 789,165 788,165 788,163 787,163 787,163 786,163 786,161 785,161 785,163 784,163 784,161 783,161 783,163 782,163 782,163 781,163 781,162 780,162 780,163 779,163 779,163 778,163 778,161 777,161 777,161 776,161 776,161 775,161 775,161 774,161 774,163 773,163 773,161 772,161 772,161 771,161 771,161 770,161 770,160 769,160 769,160 768,160 768,160 767,160 767,160 766,160 766,162 765,162 765,161 764,161 764,160 763,160 763,159 762,159 762,160 761,160 761,161 760,161 760,159 759,159 759,161 758,161 758,160 757,160 757,159 756,159 756,160 755,160 755,163 754,163 754,160 753,160 753,162 752,162 752,159 751,159 751,159 750,159 750,161 749,161 749,162 748,162 748,160 747,160 747,162 746,162 746,160 745,160 745,161 744,161 744,160 743,160 743,160 742,160 742,162 741,162 741,162 740,162 740,164 739,164 739,161 738,161 738,162 737,162 737,161 736,161 736,162 735,162 735,160 734,160 734,159 733,159 733,163 732,163 732,162 731,162 731,162 730,162 730,160 729,160 729,160 728,160 728,163 727,163 727,160 726,160 726,162 725,162 725,160 724,160 724,160 723,160 723,162 722,162 722,162 721,162 721,161 720,161 720,160 719,160 719,163 718,163 718,160 717,160 717,161 716,161 716,161 715,161 715,162 714,162 714,162 713,162 713,161 712,161 712,162 711,162 711,161 710,161 710,163 709,163 709,161 708,161 708,163 707,163 707,163 706,163 706,163 705,163 705,165 704,165 704,162 703,162 703,162 702,162 702,161 701,161 701,162 700,162 700,163 699,163 699,163 698,163 698,163 697,163 697,163 696,163 696,162 695,162 695,161 694,161 694,164 693,164 693,161 692,161 692,162 691,162 691,162 690,162 690,161 689,161 689,161 688,161 688,163 687,163 687,164 686,164 686,162 685,162 685,165 684,165 684,162 683,162 683,164 682,164 682,164 681,164 681,162 680,162 680,163 679,163 679,164 678,164 678,164 677,164 677,164 676,164 676,163 675,163 675,163 674,163 674,164 673,164 673,162 672,162 672,164 671,164 671,165 670,165 670,165 669,165 669,164 668,164 668,163 667,163 667,162 666,162 666,163 665,163 665,165 664,165 664,163 663,163 663,165 662,165 662,163 661,163 661,163 660,163 660,163 659,163 659,168 658,168 658,163 657,163 657,165 656,165 656,167 655,167 655,167 654,167 654,164 653,164 653,164 652,164 652,166 651,166 651,165 650,165 650,166 649,166 649,167 648,167 648,166 647,166 647,165 646,165 646,165 645,165 645,167 644,167 644,165 643,165 643,165 642,165 642,165 641,165 641,168 640,168 640,166 639,166 639,166 638,166 638,166 637,166 637,165 636,165 636,165 635,165 635,165 634,165 634,165 633,165 633,166 632,166 632,167 631,167 631,165 630,165 630,165 629,165 629,165 628,165 628,166 627,166 627,166 626,166 626,165 625,165 625,166 624,166 624,165 623,165 623,165 622,165 622,166 621,166 621,165 620,165 620,165 619,165 619,166 618,166 618,165 617,165 617,165 616,165 616,165 615,165 615,165 614,165 614,168 613,168 613,165 612,165 612,165 611,165 611,165 610,165 610,166 609,166 609,167 608,167 608,165 607,165 607,165 606,165 606,167 605,167 605,166 604,166 604,167 603,167 603,166 602,166 602,168 601,168 601,165 600,165 600,167 599,167 599,166 598,166 598,167 597,167 597,164 596,164 596,165 595,165 595,164 594,164 594,165 593,165 593,164 592,164 592,166 591,166 591,164 590,164 590,163 589,163 589,164 588,164 588,166 587,166 587,163 586,163 586,163 585,163 585,166 584,166 584,163 583,163 583,164 582,164 582,166 581,166 581,164 580,164 580,166 579,166 579,164 578,164 578,163 577,163 577,164 576,164 576,165 575,165 575,163 574,163 574,163 573,163 573,163 572,163 572,165 571,165 571,163 570,163 570,164 569,164 569,163 568,163 568,164 567,164 567,164 566,164 566,165 565,165 565,163 564,163 564,164 563,164 563,165 562,165 562,165 561,165 561,163 560,163 560,164 559,164 559,163 558,163 558,163 557,163 557,162 556,162 556,163 555,163 555,162 554,162 554,164 553,164 553,166 552,166 552,162 551,162 551,163 550,163 550,163 549,163 549,162 548,162 548,164 547,164 547,163 546,163 546,164 545,164 545,163 544,163 544,162 543,162 543,163 542,163 542,164 541,164 541,163 540,163 540,164 539,164 539,164 538,164 538,165 537,165 537,165 536,165 536,163 535,163 535,165 534,165 534,165 533,165 533,162 532,162 532,163 531,163 531,162 530,162 530,163 529,163 529,164 528,164 528,165 527,165 527,162 526,162 526,164 525,164 525,165 524,165 524,162 523,162 523,164 522,164 522,163 521,163 521,164 520,164 520,163 519,163 519,162 518,162 518,162 517,162 517,163 516,163 516,162 515,162 515,162 514,162 514,164 513,164 513,162 512,162 512,164 511,164 511,165 510,165 510,162 509,162 509,162 508,162 508,164 507,164 507,162 506,162 506,164 505,164 505,165 504,165 504,162 503,162 503,162 502,162 502,162 501,162 501,162 500,162 500,162 499,162 499,164 498,164 498,163 497,163 497,162 496,162 496,161 495,161 495,161 494,161 494,165 493,165 493,162 492,162 492,162 491,162 491,164 490,164 490,163 489,163 489,162 488,162 488,163 487,163 487,163 486,163 486,164 485,164 485,161 484,161 484,164 483,164 483,162 482,162 482,163 481,163 481,162 480,162 480,164 479,164 479,165 478,165 478,163 477,163 477,165 476,165 476,162 475,162 475,163 474,163 474,165 473,165 473,162 472,162 472,164 471,164 471,163 470,163 470,163 469,163 469,165 468,165 468,163 467,163 467,163 466,163 466,163 465,163 465,163 464,163 464,163 463,163 463,164 462,164 462,164 461,164 461,163 460,163 460,166 459,166 459,164 458,164 458,165 457,165 457,164 456,164 456,164 455,164 455,166 454,166 454,164 453,164 453,163 452,163 452,163 451,163 451,163 450,163 450,166 449,166 449,164 448,164 448,166 447,166 447,163 446,163 446,164 445,164 445,166 444,166 444,166 443,166 443,165 442,165 442,166 441,166 441,166 440,166 440,167 439,167 439,168 438,168 438,167 437,167 437,167 436,167 436,165 435,165 435,165 434,165 434,166 433,166 433,165 432,165 432,167 431,167 431,165 430,165 430,166 429,166 429,165 428,165 428,165 427,165 427,165 426,165 426,167 425,167 425,167 424,167 424,165 423,165 423,168 422,168 422,166 421,166 421,168 420,168 420,166 419,166 419,166 418,166 418,165 417,165 417,166 416,166 416,166 415,166 415,166 414,166 414,167 413,167 413,166 412,166 412,167 411,167 411,168 410,168 410,166 409,166 409,166 408,166 408,167 407,167 407,167 406,167 406,166 405,166 405,167 404,167 404,168 403,168 403,169 402,169 402,166 401,166 401,169 400,169 400,169 399,169 399,167 398,167 398,167 397,167 397,169 396,169 396,167 395,167 395,166 394,166 394,168 393,168 393,168 392,168 392,168 391,168 391,166 390,166 390,166 389,166 389,166 388,166 388,166 387,166 387,166 386,166 386,168 385,168 385,167 384,167 384,166 383,166 383,167 382,167 382,168 381,168 381,166 380,166 380,167 379,167 379,166 378,166 378,166 377,166 377,166 376,166 376,168 375,168 375,166 374,166 374,168 373,168 373,168 372,168 372,167 371,167 371,167 370,167 370,167 369,167 369,167 368,167 368,166 367,166 367,167 366,167 366,168 365,168 365,166 364,166 364,166 363,166 363,168 362,168 362,166 361,166 361,168 360,168 360,169 359,169 359,168 358,168 358,166 357,166 357,167 356,167 356,166 355,166 355,168 354,168 354,167 353,167 353,168 352,168 352,166 351,166 351,166 350,166 350,168 349,168 349,168 348,168 348,166 347,166 347,166 346,166 346,166 345,166 345,166 344,166 344,167 343,167 343,167 342,167 342,166 341,166 341,166 340,166 340,168 339,168 339,166 338,166 338,166 337,166 337,166 336,166 336,166 335,166 335,166 334,166 334,165 333,165 333,166 332,166 332,169 331,169 331,166 330,166 330,169 329,169 329,167 328,167 328,167 327,167 327,167 326,167 326,166 325,166 325,167 324,167 324,164 323,164 323,167 322,167 322,167 321,167 321,167 320,167 320,164 319,164 319,163 318,163 318,165 317,165 317,164 316,164 316,166 315,166 315,163 314,163 314,163 313,163 313,164 312,164 312,165 311,165 311,164 310,164 310,165 309,165 309,163 308,163 308,164 307,164 307,164 306,164 306,164 305,164 305,164 304,164 304,165 303,165 303,166 302,166 302,165 301,165 301,163 300,163 300,166 299,166 299,164 298,164 298,162 297,162 297,164 296,164 296,164 295,164 295,165 294,165 294,165 293,165 293,165 292,165 292,162 291,162 291,162 290,162 290,162 289,162 289,162 288,162 288,163 287,163 287,161 286,161 286,162 285,162 285,162 284,162 284,161 283,161 283,161 282,161 282,163 281,163 281,161 280,161 280,162 279,162 279,162 278,162 278,163 277,163 277,161 276,161 276,161 275,161 275,162 274,162 274,164 273,164 273,163 272,163 272,162 271,162 271,162 270,162 270,161 269,161 269,163 268,163 268,161 267,161 267,163 266,163 266,161 265,161 265,163 264,163 264,163 263,163 263,163 262,163 262,160 261,160 261,160 260,160 260,161 259,161 259,163 258,163 258,162 257,162 257,163 256,163 256,162 255,162 255,164 254,164 254,162 253,162 253,160 252,160 252,161 251,161 251,160 250,160 250,163 249,163 249,162 248,162 248,162 247,162 247,163 246,163 246,160 245,160 245,161 244,161 244,160 243,160 243,160 242,160 242,163 241,163 241,161 240,161 240,161 239,161 239,163 238,163 238,163 237,163 237,161 236,161 236,163 235,163 235,160 234,160 234,160 233,160 233,160 232,160 232,160 231,160 231,162 230,162 230,163 229,163 229,164 228,164 228,162 227,162 227,164 226,164 226,162 225,162 225,163 224,163 224,162 223,162 223,164 222,164 222,160 221,160 221,162 220,162 220,161 219,161 219,161 218,161 218,163 217,163 217,162 216,162 216,160 215,160 215,161 214,161 214,160 213,160 213,160 212,160 212,161 211,161 211,162 210,162 210,161 209,161 209,161 208,161 208,163 207,163 207,162 206,162 206,162 205,162 205,163 204,163 204,161 203,161 203,161 202,161 202,162 201,162 201,164 200,164 200,163 199,163 199,164 198,164 198,162 197,162 197,163 196,163 196,162 195,162 195,162 194,162 194,164 193,164 193,163 192,163 192,163 191,163 191,162 190,162 190,163 189,163 189,162 188,162 188,164 187,164 187,163 186,163 186,167 185,167 185,165 184,165 184,163 183,163 183,162 182,162 182,165 181,165 181,166 180,166 180,165 179,165 179,163 178,163 178,164 177,164 177,164 176,164 176,164 175,164 175,165 174,165 174,166 173,166 173,164 172,164 172,166 171,166 171,166 170,166 170,164 169,164 169,164 168,164 168,167 167,167 167,165 166,165 166,164 165,164 165,167 164,167 164,165 163,165 163,168 162,168 162,165 161,165 161,165 160,165 160,167 159,167 159,165 158,165 158,167 157,167 157,166 156,166 156,168 155,168 155,166 154,166 154,167 153,167 153,165 152,165 152,166 151,166 151,167 150,167 150,167 149,167 149,168 148,168 148,168 147,168 147,167 146,167 146,166 145,166 145,169 144,169 144,167 143,167 143,168 142,168 142,168 141,168 141,168 140,168 140,168 139,168 139,167 138,167 138,169 137,169 137,167 136,167 136,169 135,169 135,171 134,171 134,168 133,168 133,169 132,169 132,168 131,168 131,168 130,168 130,168 129,168 129,168 128,168 128,168 127,168 127,169 126,169 126,168 125,168 125,168 124,168 124,168 123,168 123,168 122,168 122,169 121,169 121,169 120,169 120,169 119,169 119,167 118,167 118,168 117,168 117,167 116,167 116,170 115,170 115,169 114,169 114,170 113,170 113,167 112,167 112,167 111,167 111,168 110,168 110,166 109,166 109,166 108,166 108,167 107,167 107,166 106,166 106,166 105,166 105,169 104,169 104,166 103,166 103,165 102,165 102,165 101,165 101,167 100,167 100,166 99,166 99,168 98,168 98,166 97,166 97,168 96,168 96,165 95,165 95,165 94,165 94,167 93,167 93,166 92,166 92,166 91,166 91,166 90,166 90,167 89,167 89,168 88,168 88,165 87,165 87,165 86,165 86,166 85,166 85,166 84,166 84,165 83,165 83,167 82,167 82,168 81,168 81,168 80,168 80,165 79,165 79,168 78,168 78,166 77,166 77,167 76,167 76,169 75,169 75,166 74,166 74,167 73,167 73,167 72,167" fill="#007e00" shape-rendering="crispEdges"/><polygon points="72,151.3 76,151.3 80,151.3 84,151.3 88,151.3 92,151.3 96,151.3 100,151.3 104,151.5 108,151.9 112,152.4 116,152.9 120,153.4 124,153.6 128,153.7 132,153.5 136,153.2 140,152.7 144,152.2 148,151.7 152,151.3 156,151.1 160,151.0 164,150.8 168,150.3 172,149.7 176,149.1 180,148.6 184,148.3 188,148.2 192,148.1 196,147.8 200,147.4 204,147.1 208,146.7 212,146.5 216,146.4 220,146.4 224,146.3 228,146.3 232,146.2 236,146.1 240,146.1 244,146.1 248,146.1 252,146.2 256,146.3 260,146.4 264,146.5 268,146.6 272,146.7 276,146.7 280,146.7 284,146.9 288,147.2 292,147.6 296,148.1 300,148.5 304,148.8 308,149.0 312,149.0 316,149.3 320,149.8 324,150.3 328,150.8 332,151.2 336,151.4 340,151.4 344,151.4 348,151.5 352,151.6 356,151.7 360,151.7 364,151.8 368,151.8 372,151.8 376,151.8 380,151.9 384,151.9 388,151.9 392,152.0 396,152.0 400,152.0 404,151.9 408,151.7 412,151.5 416,151.2 420,151.0 424,150.9 428,150.8 432,150.7 436,150.5 440,150.2 444,149.8 448,149.4 452,149.2 456,149.0 460,149.0 464,148.8 468,148.5 472,148.2 476,147.8 480,147.5 484,147.3 488,147.3 492,147.3 496,147.4 500,147.5 504,147.6 508,147.7 512,147.8 516,147.9 520,147.9 524,147.9 528,147.9 532,148.0 536,148.0 540,148.1 544,148.1 548,148.1 552,148.1 556,148.2 560,148.4 564,148.6 568,148.8 572,148.9 576,149.0 580,149.0 584,149.2 588,149.5 592,149.8 596,150.2 600,150.5 604,150.7 608,150.8 612,150.8 616,150.8 620,150.8 624,150.8 628,150.8 632,150.8 636,150.8 640,150.7 644,150.5 648,150.1 652,149.6 656,149.1 660,148.6 664,148.3 668,148.1 672,148.1 676,148.0 680,147.9 684,147.7 688,147.5 692,147.4 696,147.3 700,147.3 704,147.2 708,146.9 712,146.5 716,146.2 720,145.8 724,145.6 728,145.5 732,145.5 736,145.5 740,145.4 744,145.4 748,145.3 752,145.3 756,145.3 760,145.3 764,145.5 768,145.7 772,146.0 776,146.3 780,146.5 784,146.7 788,146.7 792,146.8 796,147.1 800,147.4 804,147.8 808,148.1 812,148.5 816,148.6 820,148.7 824,148.8 828,149.1 832,149.5 836,150.0 840,150.4 844,150.7 848,150.8 852,150.8 856,150.9 860,151.0 864,151.1 868,151.2 872,151.3 876,151.4 880,151.4 884,151.5 888,151.8 892,152.0 896,152.2 900,152.2 904,152.1 908,151.9 912,151.7 916,151.4 920,151.0 924,150.7 928,150.5 932,150.3 936,150.2 940,150.1 944,149.7 948,149.1 952,148.4 956,147.6 960,146.9 964,146.4 968,146.1 972,146.1 976,146.1 980,146.0 984,145.9 988,145.8 992,145.8 996,145.7 1000,145.7 1004,145.6 1008,145.5 1012,145.4 1016,145.2 1020,145.0 1024,144.9 1028,144.9 1032,145.0 1036,145.1 1040,145.3 1044,145.6 1048,145.8 1052,146.0 1056,146.1 1060,146.2 1064,146.6 1068,147.4 1072,148.4 1076,149.4 1080,150.2 1084,150.7 1088,150.8 1092,150.9 1096,151.0 1100,151.2 1104,151.4 1108,151.7 1112,151.9 1116,152.0 1120,152.0 1124,152.0 1128,152.2 1132,152.3 1136,152.5 1140,152.6 1144,152.7 1148,152.8 1152,152.8 1156,152.7 1160,152.6 1164,152.5 1168,152.4 1172,152.3 1176,152.2 1180,152.2 1184,151.9 1188,151.4 1192,150.7 1196,150.1 1200,149.5 1204,149.1 1208,149.0 1212,148.8 1216,148.5 1220,148.0 1224,147.4 1228,146.9 1232,146.5 1236,146.3 1240,146.3 1244,146.1 1248,145.8 1252,145.4 1256,145.0 1260,144.7 1264,144.4 1268,144.3 1268,144.3 1269,155.5 1269,155.5 1265,155.6 1261,155.9 1257,156.2 1253,156.6 1249,157.0 1245,157.3 1241,157.5 1237,157.5 1233,157.7 1229,158.1 1225,158.6 1221,159.2 1217,159.7 1213,160.0 1209,160.2 1205,160.3 1201,160.7 1197,161.3 1193,161.9 1189,162.6 1185,163.1 1181,163.4 1177,163.4 1173,163.5 1169,163.6 1165,163.7 1161,163.8 1157,163.9 1153,164.0 1149,164.0 1145,163.9 1141,163.8 1137,163.7 1133,163.5 1129,163.4 1125,163.2 1121,163.2 1117,163.2 1113,163.1 1109,162.9 1105,162.6 1101,162.4 1097,162.2 1093,162.1 1089,162.0 1085,161.9 1081,161.4 1077,160.6 1073,159.6 1069,158.6 1065,157.8 1061,157.4 1057,157.3 1053,157.2 1049,157.0 1045,156.8 1041,156.5 1037,156.3 1033,156.2 1029,156.1 1025,156.1 1021,156.2 1017,156.4 1013,156.6 1009,156.7 1005,156.8 1001,156.9 997,156.9 993,157.0 989,157.0 985,157.1 981,157.2 977,157.3 973,157.3 969,157.3 965,157.6 961,158.1 957,158.8 953,159.6 949,160.3 945,160.9 941,161.3 937,161.4 933,161.5 929,161.7 925,161.9 921,162.2 917,162.6 913,162.9 909,163.1 905,163.3 901,163.4 897,163.4 893,163.2 889,163.0 885,162.7 881,162.6 877,162.6 873,162.5 869,162.4 865,162.3 861,162.2 857,162.1 853,162.0 849,162.0 845,161.9 841,161.6 837,161.2 833,160.7 829,160.3 825,160.0 821,159.9 817,159.8 813,159.7 809,159.3 805,159.0 801,158.6 797,158.3 793,158.0 789,157.9 785,157.9 781,157.7 777,157.5 773,157.2 769,156.9 765,156.7 761,156.5 757,156.5 753,156.5 749,156.5 745,156.6 741,156.6 737,156.7 733,156.7 729,156.7 725,156.8 721,157.0 717,157.4 713,157.7 709,158.1 705,158.4 701,158.5 697,158.5 693,158.6 689,158.7 685,158.9 681,159.1 677,159.2 673,159.3 669,159.3 665,159.5 661,159.8 657,160.3 653,160.8 649,161.3 645,161.7 641,161.9 637,162.0 633,162.0 629,162.0 625,162.0 621,162.0 617,162.0 613,162.0 609,162.0 605,161.9 601,161.7 597,161.4 593,161.0 589,160.7 585,160.4 581,160.2 577,160.2 573,160.1 569,160.0 565,159.8 561,159.6 557,159.4 553,159.3 549,159.3 545,159.3 541,159.3 537,159.2 533,159.2 529,159.1 525,159.1 521,159.1 517,159.1 513,159.0 509,158.9 505,158.8 501,158.7 497,158.6 493,158.5 489,158.5 485,158.5 481,158.7 477,159.0 473,159.4 469,159.7 465,160.0 461,160.2 457,160.2 453,160.4 449,160.6 445,161.0 441,161.4 437,161.7 433,161.9 429,162.0 425,162.1 421,162.2 417,162.4 413,162.7 409,162.9 405,163.1 401,163.2 397,163.2 393,163.2 389,163.1 385,163.1 381,163.1 377,163.0 373,163.0 369,163.0 365,163.0 361,162.9 357,162.9 353,162.8 349,162.7 345,162.6 341,162.6 337,162.6 333,162.4 329,162.0 325,161.5 321,161.0 317,160.5 313,160.2 309,160.2 305,160.0 301,159.7 297,159.3 293,158.8 289,158.4 285,158.1 281,157.9 277,157.9 273,157.9 269,157.8 265,157.7 261,157.6 257,157.5 253,157.4 249,157.3 245,157.3 241,157.3 237,157.3 233,157.4 229,157.5 225,157.5 221,157.6 217,157.6 213,157.7 209,157.9 205,158.3 201,158.6 197,159.0 193,159.3 189,159.4 185,159.5 181,159.8 177,160.3 173,160.9 169,161.5 165,162.0 161,162.2 157,162.3 153,162.5 149,162.9 145,163.4 141,163.9 137,164.4 133,164.7 129,164.9 125,164.8 121,164.6 117,164.1 113,163.6 109,163.1 105,162.7 101,162.5 97,162.5 93,162.5 89,162.5 85,162.5 81,162.5 77,162.5 73,162.5" fill="#006c00"/><polygon points="72,154.0 76,154.0 80,154.0 84,154.0 88,154.0 92,154.0 96,154.0 100,154.0 104,154.2 108,154.6 112,155.1 116,155.6 120,156.1 124,156.3 128,156.4 132,156.2 136,155.9 140,155.4 144,154.9 148,154.4 152,154.0 156,153.8 160,153.7 164,153.5 168,153.0 172,152.4 176,151.8 180,151.3 184,151.0 188,150.9 192,150.8 196,150.5 200,150.1 204,149.8 208,149.4 212,149.2 216,149.1 220,149.1 224,149.0 228,149.0 232,148.9 236,148.8 240,148.8 244,148.8 248,148.8 252,148.9 256,149.0 260,149.1 264,149.2 268,149.3 272,149.4 276,149.4 280,149.4 284,149.6 288,149.9 292,150.3 296,150.8 300,151.2 304,151.5 308,151.7 312,151.7 316,152.0 320,152.5 324,153.0 328,153.5 332,153.9 336,154.1 340,154.1 344,154.1 348,154.2 352,154.3 356,154.4 360,154.4 364,154.5 368,154.5 372,154.5 376,154.5 380,154.6 384,154.6 388,154.6 392,154.7 396,154.7 400,154.7 404,154.6 408,154.4 412,154.2 416,153.9 420,153.7 424,153.6 428,153.5 432,153.4 436,153.2 440,152.9 444,152.5 448,152.1 452,151.9 456,151.7 460,151.7 464,151.5 468,151.2 472,150.9 476,150.5 480,150.2 484,150.0 488,150.0 492,150.0 496,150.1 500,150.2 504,150.3 508,150.4 512,150.5 516,150.6 520,150.6 524,150.6 528,150.6 532,150.7 536,150.7 540,150.8 544,150.8 548,150.8 552,150.8 556,150.9 560,151.1 564,151.3 568,151.5 572,151.6 576,151.7 580,151.7 584,151.9 588,152.2 592,152.5 596,152.9 600,153.2 604,153.4 608,153.5 612,153.5 616,153.5 620,153.5 624,153.5 628,153.5 632,153.5 636,153.5 640,153.4 644,153.2 648,152.8 652,152.3 656,151.8 660,151.3 664,151.0 668,150.8 672,150.8 676,150.7 680,150.6 684,150.4 688,150.2 692,150.1 696,150.0 700,150.0 704,149.9 708,149.6 712,149.2 716,148.9 720,148.5 724,148.3 728,148.2 732,148.2 736,148.2 740,148.1 744,148.1 748,148.0 752,148.0 756,148.0 760,148.0 764,148.2 768,148.4 772,148.7 776,149.0 780,149.2 784,149.4 788,149.4 792,149.5 796,149.8 800,150.1 804,150.5 808,150.8 812,151.2 816,151.3 820,151.4 824,151.5 828,151.8 832,152.2 836,152.7 840,153.1 844,153.4 848,153.5 852,153.5 856,153.6 860,153.7 864,153.8 868,153.9 872,154.0 876,154.1 880,154.1 884,154.2 888,154.5 892,154.7 896,154.9 900,154.9 904,154.8 908,154.6 912,154.4 916,154.1 920,153.7 924,153.4 928,153.2 932,153.0 936,152.9 940,152.8 944,152.4 948,151.8 952,151.1 956,150.3 960,149.6 964,149.1 968,148.8 972,148.8 976,148.8 980,148.7 984,148.6 988,148.5 992,148.5 996,148.4 1000,148.4 1004,148.3 1008,148.2 1012,148.1 1016,147.9 1020,147.7 1024,147.6 1028,147.6 1032,147.7 1036,147.8 1040,148.0 1044,148.3 1048,148.5 1052,148.7 1056,148.8 1060,148.9 1064,149.3 1068,150.1 1072,151.1 1076,152.1 1080,152.9 1084,153.4 1088,153.5 1092,153.6 1096,153.7 1100,153.9 1104,154.1 1108,154.4 1112,154.6 1116,154.7 1120,154.7 1124,154.7 1128,154.9 1132,155.0 1136,155.2 1140,155.3 1144,155.4 1148,155.5 1152,155.5 1156,155.4 1160,155.3 1164,155.2 1168,155.1 1172,155.0 1176,154.9 1180,154.9 1184,154.6 1188,154.1 1192,153.4 1196,152.8 1200,152.2 1204,151.8 1208,151.7 1212,151.5 1216,151.2 1220,150.7 1224,150.1 1228,149.6 1232,149.2 1236,149.0 1240,149.0 1244,148.8 1248,148.5 1252,148.1 1256,147.7 1260,147.4 1264,147.1 1268,147.0 1268,147.0 1269,152.8 1269,152.8 1265,152.9 1261,153.2 1257,153.5 1253,153.9 1249,154.3 1245,154.6 1241,154.8 1237,154.8 1233,155.0 1229,155.4 1225,155.9 1221,156.5 1217,157.0 1213,157.3 1209,157.5 1205,157.6 1201,158.0 1197,158.6 1193,159.2 1189,159.9 1185,160.4 1181,160.7 1177,160.7 1173,160.8 1169,160.9 1165,161.0 1161,161.1 1157,161.2 1153,161.3 1149,161.3 1145,161.2 1141,161.1 1137,161.0 1133,160.8 1129,160.7 1125,160.5 1121,160.5 1117,160.5 1113,160.4 1109,160.2 1105,159.9 1101,159.7 1097,159.5 1093,159.4 1089,159.3 1085,159.2 1081,158.7 1077,157.9 1073,156.9 1069,155.9 1065,155.1 1061,154.7 1057,154.6 1053,154.5 1049,154.3 1045,154.1 1041,153.8 1037,153.6 1033,153.5 1029,153.4 1025,153.4 1021,153.5 1017,153.7 1013,153.9 1009,154.0 1005,154.1 1001,154.2 997,154.2 993,154.3 989,154.3 985,154.4 981,154.5 977,154.6 973,154.6 969,154.6 965,154.9 961,155.4 957,156.1 953,156.9 949,157.6 945,158.2 941,158.6 937,158.7 933,158.8 929,159.0 925,159.2 921,159.5 917,159.9 913,160.2 909,160.4 905,160.6 901,160.7 897,160.7 893,160.5 889,160.3 885,160.0 881,159.9 877,159.9 873,159.8 869,159.7 865,159.6 861,159.5 857,159.4 853,159.3 849,159.3 845,159.2 841,158.9 837,158.5 833,158.0 829,157.6 825,157.3 821,157.2 817,157.1 813,157.0 809,156.6 805,156.3 801,155.9 797,155.6 793,155.3 789,155.2 785,155.2 781,155.0 777,154.8 773,154.5 769,154.2 765,154.0 761,153.8 757,153.8 753,153.8 749,153.8 745,153.9 741,153.9 737,154.0 733,154.0 729,154.0 725,154.1 721,154.3 717,154.7 713,155.0 709,155.4 705,155.7 701,155.8 697,155.8 693,155.9 689,156.0 685,156.2 681,156.4 677,156.5 673,156.6 669,156.6 665,156.8 661,157.1 657,157.6 653,158.1 649,158.6 645,159.0 641,159.2 637,159.3 633,159.3 629,159.3 625,159.3 621,159.3 617,159.3 613,159.3 609,159.3 605,159.2 601,159.0 597,158.7 593,158.3 589,158.0 585,157.7 581,157.5 577,157.5 573,157.4 569,157.3 565,157.1 561,156.9 557,156.7 553,156.6 549,156.6 545,156.6 541,156.6 537,156.5 533,156.5 529,156.4 525,156.4 521,156.4 517,156.4 513,156.3 509,156.2 505,156.1 501,156.0 497,155.9 493,155.8 489,155.8 485,155.8 481,156.0 477,156.3 473,156.7 469,157.0 465,157.3 461,157.5 457,157.5 453,157.7 449,157.9 445,158.3 441,158.7 437,159.0 433,159.2 429,159.3 425,159.4 421,159.5 417,159.7 413,160.0 409,160.2 405,160.4 401,160.5 397,160.5 393,160.5 389,160.4 385,160.4 381,160.4 377,160.3 373,160.3 369,160.3 365,160.3 361,160.2 357,160.2 353,160.1 349,160.0 345,159.9 341,159.9 337,159.9 333,159.7 329,159.3 325,158.8 321,158.3 317,157.8 313,157.5 309,157.5 305,157.3 301,157.0 297,156.6 293,156.1 289,155.7 285,155.4 281,155.2 277,155.2 273,155.2 269,155.1 265,155.0 261,154.9 257,154.8 253,154.7 249,154.6 245,154.6 241,154.6 237,154.6 233,154.7 229,154.8 225,154.8 221,154.9 217,154.9 213,155.0 209,155.2 205,155.6 201,155.9 197,156.3 193,156.6 189,156.7 185,156.8 181,157.1 177,157.6 173,158.2 169,158.8 165,159.3 161,159.5 157,159.6 153,159.8 149,160.2 145,160.7 141,161.2 137,161.7 133,162.0 129,162.2 125,162.1 121,161.9 117,161.4 113,160.9 109,160.4 105,160.0 101,159.8 97,159.8 93,159.8 89,159.8 85,159.8 81,159.8 77,159.8 73,159.8" fill="#00bc00"/><svg x="0" y="0" width="1279" height="709"><clipPath id="pc"><rect x="72" y="3" width="1197" height="539"/></clipPath><polyline clip-path="url(#pc)" points="-40.0,352.6 -34.6,337.4 -28.2,314.5 -21.1,296.8 -14.3,273.4 -7.9,256.1 -0.3,228.2 7.8,190.2 14.2,205.4 20.5,228.2 26.8,246.0 34.5,273.4 42.1,294.2 48.4,314.5 52.2,332.3 56.0,352.6 56.0,352.6 61.4,337.4 67.8,314.5 74.9,296.8 81.7,273.4 88.1,256.1 95.7,228.2 103.8,190.2 110.2,205.4 116.5,228.2 122.8,246.0 130.5,273.4 138.1,294.2 144.4,314.5 148.2,332.3 152.0,352.6 152.0,352.6 157.4,337.4 163.8,314.5 170.9,296.8 177.7,273.4 184.1,256.1 191.7,228.2 199.8,190.2 206.2,205.4 212.5,228.2 218.8,246.0 226.5,273.4 234.1,294.2 240.4,314.5 244.2,332.3 248.0,352.6 248.0,352.6 253.4,337.4 259.8,314.5 266.9,296.8 273.7,273.4 280.1,256.1 287.7,228.2 295.8,190.2 302.2,205.4 308.5,228.2 314.8,246.0 322.5,273.4 330.1,294.2 336.4,314.5 340.2,332.3 344.0,352.6 344.0,352.6 349.4,337.4 355.8,314.5 362.9,296.8 369.7,273.4 376.1,256.1 383.7,228.2 391.8,190.2 398.2,205.4 404.5,228.2 410.8,246.0 418.5,273.4 426.1,294.2 432.4,314.5 436.2,332.3 440.0,352.6 440.0,352.6 445.4,337.4 451.8,314.5 458.9,296.8 465.7,273.4 472.1,256.1 479.7,228.2 487.8,190.2 494.2,205.4 500.5,228.2 506.8,246.0 514.5,273.4 522.1,294.2 528.4,314.5 532.2,332.3 536.0,352.6 536.0,352.6 541.4,337.4 547.8,314.5 554.9,296.8 561.7,273.4 568.1,256.1 575.7,228.2 583.8,190.2 590.2,205.4 596.5,228.2 602.8,246.0 610.5,273.4 618.1,294.2 624.4,314.5 628.2,332.3 632.0,352.6 632.0,352.6 637.4,337.4 643.8,314.5 650.9,296.8 657.7,273.4 664.1,256.1 671.7,228.2 679.8,190.2 686.2,205.4 692.5,228.2 698.8,246.0 706.5,273.4 714.1,294.2 720.4,314.5 724.2,332.3 728.0,352.6 728.0,352.6 733.4,337.4 739.8,314.5 746.9,296.8 753.7,273.4 760.1,256.1 767.7,228.2 775.8,190.2 782.2,205.4 788.5,228.2 794.8,246.0 802.5,273.4 810.1,294.2 816.4,314.5 820.2,332.3 824.0,352.6 824.0,352.6 829.4,337.4 835.8,314.5 842.9,296.8 849.7,273.4 856.1,256.1 863.7,228.2 871.8,190.2 878.2,205.4 884.5,228.2 890.8,246.0 898.5,273.4 906.1,294.2 912.4,314.5 916.2,332.3 920.0,352.6 920.0,352.6 925.4,337.4 931.8,314.5 938.9,296.8 945.7,273.4 952.1,256.1 959.7,228.2 967.8,190.2 974.2,205.4 980.5,228.2 986.8,246.0 994.5,273.4 1002.1,294.2 1008.4,314.5 1012.2,332.3 1016.0,352.6 1016.0,352.6 1021.4,337.4 1027.8,314.5 1034.9,296.8 1041.7,273.4 1048.1,256.1 1055.7,228.2 1063.8,190.2 1070.2,205.4 1076.5,228.2 1082.8,246.0 1090.5,273.4 1098.1,294.2 1104.4,314.5 1108.2,332.3 1112.0,352.6 1112.0,352.6 1117.4,337.4 1123.8,314.5 1130.9,296.8 1137.7,273.4 1144.1,256.1 1151.7,228.2 1159.8,190.2 1166.2,205.4 1172.5,228.2 1178.8,246.0 1186.5,273.4 1194.1,294.2 1200.4,314.5 1204.2,332.3 1208.0,352.6 1208.0,352.6 1213.4,337.4 1219.8,314.5 1226.9,296.8 1233.7,273.4 1240.1,256.1 1247.7,228.2 1255.8,190.2 1262.2,205.4 1268.5,228.2 1274.8,246.0 1282.5,273.4 1290.1,294.2 1296.4,314.5 1300.2,332.3 1304.0,352.6 1304.0,352.6 1309.4,337.4 1315.8,314.5 1322.9,296.8 1329.7,273.4 1336.1,256.1 1343.7,228.2 1351.8,190.2 1358.2,205.4 1364.5,228.2 1370.8,246.0 1378.5,273.4 1386.1,294.2 1392.4,314.5 1396.2,332.3 1400.0,352.6" fill="none" stroke="#f0f000" stroke-width="1.85" stroke-linejoin="miter"/></svg><svg x="0" y="0" width="1279" height="709"><clipPath id="pc5"><rect x="72" y="3" width="1197" height="539"/></clipPath><g clip-path="url(#pc5)"><path d="M26.0,401 L32.0,364 L32.0,401Z M49.5,401 L55.5,370.5 L55.5,401Z M74.0,401 L80.0,364 L80.0,401Z M97.5,401 L103.5,368 L103.5,401Z M122.0,401 L128.0,364 L128.0,401Z M145.5,401 L151.5,370.5 L151.5,401Z M170.0,401 L176.0,364 L176.0,401Z M193.5,401 L199.5,368 L199.5,401Z M218.0,401 L224.0,364 L224.0,401Z M241.5,401 L247.5,370.5 L247.5,401Z M266.0,401 L272.0,364 L272.0,401Z M289.5,401 L295.5,368 L295.5,401Z M314.0,401 L320.0,364 L320.0,401Z M337.5,401 L343.5,370.5 L343.5,401Z M362.0,401 L368.0,364 L368.0,401Z M385.5,401 L391.5,368 L391.5,401Z M410.0,401 L416.0,364 L416.0,401Z M433.5,401 L439.5,370.5 L439.5,401Z M458.0,401 L464.0,364 L464.0,401Z M481.5,401 L487.5,368 L487.5,401Z M506.0,401 L512.0,364 L512.0,401Z M529.5,401 L535.5,370.5 L535.5,401Z M554.0,401 L560.0,364 L560.0,401Z M577.5,401 L583.5,368 L583.5,401Z M602.0,401 L608.0,364 L608.0,401Z M625.5,401 L631.5,370.5 L631.5,401Z M650.0,401 L656.0,364 L656.0,401Z M673.5,401 L679.5,368 L679.5,401Z M698.0,401 L704.0,364 L704.0,401Z M721.5,401 L727.5,370.5 L727.5,401Z M746.0,401 L752.0,364 L752.0,401Z M769.5,401 L775.5,368 L775.5,401Z M794.0,401 L800.0,364 L800.0,401Z M817.5,401 L823.5,370.5 L823.5,401Z M842.0,401 L848.0,364 L848.0,401Z M865.5,401 L871.5,368 L871.5,401Z M890.0,401 L896.0,364 L896.0,401Z M913.5,401 L919.5,370.5 L919.5,401Z M938.0,401 L944.0,364 L944.0,401Z M961.5,401 L967.5,368 L967.5,401Z M986.0,401 L992.0,364 L992.0,401Z M1009.5,401 L1015.5,370.5 L1015.5,401Z M1034.0,401 L1040.0,364 L1040.0,401Z M1057.5,401 L1063.5,368 L1063.5,401Z M1082.0,401 L1088.0,364 L1088.0,401Z M1105.5,401 L1111.5,370.5 L1111.5,401Z M1130.0,401 L1136.0,364 L1136.0,401Z M1153.5,401 L1159.5,368 L1159.5,401Z M1178.0,401 L1184.0,364 L1184.0,401Z M1201.5,401 L1207.5,370.5 L1207.5,401Z M1226.0,401 L1232.0,364 L1232.0,401Z M1249.5,401 L1255.5,368 L1255.5,401Z M1274.0,401 L1280.0,364 L1280.0,401Z" fill="#30f830" fill-opacity="0.35"/><path d="M8.5,410.7V445.2 M9.5,413.5V446.6 M10.5,410.5V447.3 M11.5,415.2V453.3 M12.5,417.1V455.1 M13.5,419.2V453.3 M14.5,421.1V450.5 M15.5,417.4V432.1M15.5,435.1V446.5 M16.5,423.4V446.8 M17.5,420.4V443.4 M18.5,423.3V440.5 M29.5,389V403 M33.5,407.4V444.6 M34.5,414.4V448.5 M35.5,411.5V454.1 M36.5,413.6V447.5 M37.5,413.2V452.0 M38.5,414.1V446.4M38.5,449.4V454.1 M39.5,420.5V449.1 M40.5,420.1V448.3 M41.5,423.2V435.5M41.5,438.5V447.9 M42.5,423.4V448.0 M43.5,423.5V432.5M43.5,435.5V443.2 M53.0,389V403 M56.5,407.7V450.6 M57.5,410.0V447.6 M58.5,415.6V433.9M58.5,436.9V450.5 M59.5,413.3V457.2 M60.5,412.6V449.7 M61.5,416.2V430.5M61.5,433.5V451.8 M62.5,416.9V442.1M62.5,445.1V452.3 M63.5,417.3V444.9M63.5,447.9V451.7 M64.5,419.1V443.9 M65.5,423.6V445.7 M66.5,425.8V440.4 M77.5,389V403 M81.5,410.7V437.6M81.5,440.6V446.4 M82.5,410.1V436.4M82.5,439.4V447.5 M83.5,411.7V451.6 M84.5,412.2V447.5 M85.5,417.0V428.3M85.5,431.3V448.4 M86.5,419.0V432.3M86.5,435.3V450.8 M87.5,419.4V452.9 M88.5,418.2V430.4M88.5,433.4V448.0 M89.5,421.5V447.3 M90.5,421.7V431.2M90.5,434.2V445.2 M91.5,424.9V439.3 M101.0,389V403 M104.5,409.6V445.7 M105.5,413.0V449.1 M106.5,411.6V448.1 M107.5,416.8V442.9M107.5,445.9V450.1 M108.5,417.7V442.0M108.5,445.0V450.7 M109.5,416.0V459.5 M110.5,416.3V446.9M110.5,449.9V453.0 M111.5,418.9V450.0 M112.5,419.9V449.2 M113.5,424.9V444.2 M114.5,423.8V432.3M114.5,435.3V442.0 M125.5,389V403 M129.5,410.0V417.8M129.5,420.8V446.6 M130.5,413.3V454.8 M131.5,413.1V450.7 M132.5,416.7V436.4M132.5,439.4V452.5 M133.5,413.8V436.7M133.5,439.7V448.1 M134.5,415.5V443.6M134.5,446.6V454.0 M135.5,419.4V449.8 M136.5,418.8V456.8 M137.5,421.5V437.4M137.5,440.4V444.6 M138.5,424.2V446.7 M139.5,422.1V443.3 M149.0,389V403 M152.5,412.2V446.7 M153.5,408.8V446.5 M154.5,414.6V448.9 M155.5,412.5V453.4 M156.5,416.3V450.9 M157.5,417.4V456.6 M158.5,419.5V445.2M158.5,448.2V457.1 M159.5,417.9V456.0 M160.5,421.9V454.6 M161.5,420.9V442.7 M162.5,422.2V429.5M162.5,432.5V438.3 M173.5,389V403 M177.5,408.0V445.9 M178.5,413.2V447.7 M179.5,413.3V440.2M179.5,443.2V448.3 M180.5,411.8V438.9M180.5,441.9V453.2 M181.5,417.5V450.2 M182.5,416.4V431.6M182.5,434.6V460.4 M183.5,418.3V436.2M183.5,439.2V448.6 M184.5,417.2V447.5 M185.5,419.7V446.7 M186.5,424.3V442.7 M187.5,424.9V437.7M187.5,440.7V443.5 M197.0,389V403 M200.5,411.6V442.0 M201.5,408.9V449.2 M202.5,414.8V431.2M202.5,434.2V447.1 M203.5,415.3V449.7 M204.5,413.0V452.7 M205.5,416.4V423.6M205.5,426.6V452.1 M206.5,416.7V454.6 M207.5,421.8V435.2M207.5,438.2V450.6 M208.5,417.7V447.2M208.5,450.2V453.8 M209.5,423.4V441.6 M210.5,421.2V435.2M210.5,438.2V441.8 M221.5,389V403 M225.5,408.9V441.5 M226.5,413.9V446.2 M227.5,411.9V443.6M227.5,446.6V451.3 M228.5,416.5V451.6 M229.5,413.7V451.7 M230.5,418.7V430.1M230.5,433.1V453.6 M231.5,419.6V451.9 M232.5,421.9V450.5 M233.5,422.2V452.0 M234.5,422.4V443.8 M235.5,426.1V444.5 M245.0,389V403 M248.5,410.9V444.4 M249.5,410.3V437.9M249.5,440.9V445.9 M250.5,411.3V446.8 M251.5,413.5V448.4 M252.5,413.2V451.9 M253.5,414.7V438.7M253.5,441.7V448.4 M254.5,417.9V453.6 M255.5,418.9V447.7 M256.5,419.8V447.9 M257.5,420.1V446.3 M258.5,422.3V446.5 M269.5,389V403 M273.5,409.4V423.0M273.5,426.0V444.8 M274.5,414.0V440.2M274.5,443.2V451.2 M275.5,412.5V425.4M275.5,428.4V454.3 M276.5,415.8V449.6 M277.5,417.9V444.8M277.5,447.8V450.7 M278.5,417.9V453.3 M279.5,419.3V429.2M279.5,432.2V450.6 M280.5,419.7V446.0 M281.5,419.0V449.7 M282.5,420.7V443.7 M283.5,425.6V434.0M283.5,437.0V445.0 M293.0,389V403 M296.5,412.2V438.0M296.5,441.0V443.9 M297.5,410.6V434.4M297.5,437.4V443.0 M298.5,412.0V442.5M298.5,445.5V453.7 M299.5,415.1V449.0M299.5,452.0V454.9 M300.5,414.6V449.1 M301.5,417.6V444.2M301.5,447.2V452.6 M302.5,416.6V451.0 M303.5,421.8V435.1M303.5,438.1V455.4 M304.5,422.4V451.1 M305.5,423.8V449.4 M306.5,422.7V439.1 M317.5,389V403 M321.5,409.7V449.0 M322.5,414.1V448.0 M323.5,410.6V453.2 M324.5,414.4V447.5 M325.5,417.8V455.8 M326.5,415.9V449.0 M327.5,417.1V449.6 M328.5,418.5V450.8 M329.5,421.0V452.9 M330.5,420.2V454.1 M331.5,423.5V435.2M331.5,438.2V441.1 M341.0,389V403 M344.5,411.3V444.3 M345.5,408.9V430.1M345.5,433.1V448.6 M346.5,410.8V448.7 M347.5,414.1V448.7 M348.5,414.3V452.9 M349.5,419.1V452.8 M350.5,418.3V460.6 M351.5,421.5V447.0 M352.5,419.9V428.8M352.5,431.8V450.9 M353.5,420.9V436.7M353.5,439.7V443.1 M354.5,423.7V441.3 M365.5,389V403 M369.5,413.0V422.0M369.5,425.0V444.9 M370.5,411.1V449.5 M371.5,410.0V451.6 M372.5,414.6V456.6 M373.5,415.3V453.2 M374.5,414.9V454.0 M375.5,418.0V454.3 M376.5,418.5V440.1M376.5,443.1V448.4 M377.5,419.7V452.9 M378.5,419.4V445.1 M379.5,420.9V440.8 M389.0,389V403 M392.5,408.8V426.1M392.5,429.1V440.0 M393.5,412.1V449.2 M394.5,410.0V426.0M394.5,429.0V447.9 M395.5,412.6V444.1M395.5,447.1V451.7 M396.5,414.6V455.8 M397.5,418.6V454.8 M398.5,421.0V452.5 M399.5,419.8V440.5M399.5,443.5V458.2 M400.5,418.6V433.2M400.5,436.2V450.4 M401.5,421.6V431.5M401.5,434.5V446.8 M402.5,425.5V446.4 M413.5,389V403 M417.5,409.5V426.8M417.5,429.8V439.9 M418.5,409.9V421.1M418.5,424.1V443.2 M419.5,415.8V447.3 M420.5,415.4V424.1M420.5,427.1V449.0 M421.5,415.2V459.9 M422.5,414.6V452.3 M423.5,419.2V435.2M423.5,438.2V451.6 M424.5,421.8V452.9 M425.5,422.1V445.6 M426.5,424.6V444.3 M427.5,426.2V438.7 M437.0,389V403 M440.5,411.1V419.2M440.5,422.2V446.3 M441.5,408.8V437.1M441.5,440.1V446.3 M442.5,415.7V447.5 M443.5,411.2V448.5 M444.5,412.7V449.9 M445.5,416.1V451.6 M446.5,420.6V453.8 M447.5,421.4V450.7 M448.5,420.9V444.0 M449.5,424.4V441.5M449.5,444.5V451.1 M450.5,425.0V439.0M450.5,442.0V445.8 M461.5,389V403 M465.5,410.4V423.1M465.5,426.1V441.4 M466.5,411.1V448.0 M467.5,414.5V439.8M467.5,442.8V451.5 M468.5,413.2V452.3M468.5,455.3V457.9 M469.5,416.7V451.4 M470.5,418.3V452.9 M471.5,419.5V451.4 M472.5,418.3V452.4 M473.5,418.9V449.0 M474.5,421.4V449.5 M475.5,421.3V429.9M475.5,432.9V440.1 M485.0,389V403 M488.5,410.2V446.2 M489.5,413.3V452.1 M490.5,411.2V451.7 M491.5,413.5V428.4M491.5,431.4V451.5 M492.5,414.7V456.2 M493.5,413.8V449.6 M494.5,420.4V448.2 M495.5,420.1V450.7 M496.5,418.1V444.0 M497.5,419.5V442.2M497.5,445.2V450.4 M498.5,425.3V433.9M498.5,436.9V440.9 M509.5,389V403 M513.5,408.7V419.0M513.5,422.0V448.4 M514.5,412.4V446.3 M515.5,410.9V449.1 M516.5,415.1V452.3 M517.5,415.9V440.0M517.5,443.0V457.8 M518.5,415.8V454.6 M519.5,420.1V454.3 M520.5,420.2V452.7 M521.5,420.3V436.2M521.5,439.2V445.5 M522.5,421.6V446.2 M523.5,425.1V440.1 M533.0,389V403 M536.5,410.0V446.6 M537.5,411.5V447.4 M538.5,413.1V449.8 M539.5,412.9V449.2 M540.5,417.3V450.8 M541.5,416.1V454.7 M542.5,419.0V451.5 M543.5,419.6V455.8 M544.5,419.4V442.8M544.5,445.8V450.3 M545.5,421.9V451.2 M546.5,425.0V437.0M546.5,440.0V443.2 M557.5,389V403 M561.5,412.2V443.1 M562.5,411.6V449.4 M563.5,410.8V424.0M563.5,427.0V448.4 M564.5,415.5V450.3 M565.5,416.1V427.4M565.5,430.4V448.1 M566.5,417.3V439.5M566.5,442.5V451.2 M567.5,417.0V453.2 M568.5,416.8V438.1M568.5,441.1V448.7 M569.5,418.5V447.4 M570.5,419.6V444.5 M571.5,426.2V432.8M571.5,435.8V438.3 M581.0,389V403 M584.5,412.9V420.1M584.5,423.1V441.3 M585.5,410.9V449.4 M586.5,413.1V445.7 M587.5,415.3V436.2M587.5,439.2V449.9 M588.5,418.3V459.8 M589.5,419.8V440.6M589.5,443.6V455.2 M590.5,420.2V432.6M590.5,435.6V454.3 M591.5,417.1V451.5 M592.5,417.7V448.1 M593.5,419.7V427.4M593.5,430.4V442.8 M594.5,423.6V440.7 M605.5,389V403 M609.5,412.4V442.4 M610.5,412.4V443.9 M611.5,414.2V445.2 M612.5,416.1V428.2M612.5,431.2V450.0 M613.5,415.7V449.3 M614.5,415.3V453.8 M615.5,418.9V447.5 M616.5,420.5V447.1 M617.5,421.2V437.1M617.5,440.1V447.9 M618.5,424.5V445.1 M619.5,422.0V441.5 M629.0,389V403 M632.5,408.5V444.2 M633.5,413.2V448.8 M634.5,412.9V445.3 M635.5,411.5V447.6 M636.5,418.0V453.8 M637.5,418.7V456.7 M638.5,418.4V454.0 M639.5,417.5V439.2M639.5,442.2V452.6 M640.5,423.1V455.6 M641.5,422.0V436.2M641.5,439.2V441.8 M642.5,425.7V441.7 M653.5,389V403 M657.5,410.1V441.7 M658.5,411.5V450.6 M659.5,411.7V445.6 M660.5,411.5V451.7 M661.5,415.6V428.8M661.5,431.8V449.1 M662.5,417.2V451.6 M663.5,418.4V441.9M663.5,444.9V447.5 M664.5,420.3V438.7M664.5,441.7V447.1 M665.5,421.3V455.3 M666.5,424.0V443.0 M667.5,424.4V441.7 M677.0,389V403 M680.5,411.4V422.4M680.5,425.4V443.5 M681.5,410.6V449.2 M682.5,410.5V452.0 M683.5,413.4V439.6M683.5,442.6V448.7 M684.5,412.9V454.4 M685.5,417.5V451.7 M686.5,419.8V427.8M686.5,430.8V451.9 M687.5,418.6V437.0M687.5,440.0V449.3 M688.5,422.1V445.0 M689.5,423.7V447.9 M690.5,425.1V433.5M690.5,436.5V442.6 M701.5,389V403 M705.5,412.0V419.6M705.5,422.6V441.8 M706.5,414.3V445.2 M707.5,413.7V448.1 M708.5,414.1V452.3 M709.5,412.9V442.7M709.5,445.7V460.7 M710.5,416.3V453.3 M711.5,418.2V427.3M711.5,430.3V449.3 M712.5,418.5V456.4 M713.5,419.5V446.9 M714.5,421.5V450.5 M715.5,424.2V432.1M715.5,435.1V443.8 M725.0,389V403 M728.5,409.3V419.9M728.5,422.9V449.4 M729.5,412.1V444.4 M730.5,413.5V428.8M730.5,431.8V449.6 M731.5,413.4V457.1 M732.5,414.7V440.2M732.5,443.2V454.4 M733.5,419.5V454.7 M734.5,415.2V448.3 M735.5,420.1V435.9M735.5,438.9V449.0 M736.5,422.9V436.9M736.5,439.9V447.9 M737.5,420.3V445.8 M738.5,423.4V446.9 M749.5,389V403 M753.5,408.7V446.6 M754.5,409.3V446.0 M755.5,412.4V455.0 M756.5,412.3V453.3 M757.5,415.8V437.6M757.5,440.6V454.8 M758.5,414.8V452.5 M759.5,418.2V447.5 M760.5,416.7V432.6M760.5,435.6V451.8 M761.5,419.0V454.3 M762.5,424.7V443.3 M763.5,425.3V437.5M763.5,440.5V443.6 M773.0,389V403 M776.5,413.0V442.2 M777.5,413.4V445.8 M778.5,413.1V453.2 M779.5,411.7V455.6 M780.5,415.0V451.9 M781.5,417.0V451.2 M782.5,420.7V452.7 M783.5,419.6V441.5M783.5,444.5V452.1 M784.5,420.6V453.6 M785.5,421.7V443.4 M786.5,421.6V441.6 M797.5,389V403 M801.5,410.3V426.4M801.5,429.4V439.9 M802.5,409.8V445.9 M803.5,410.2V424.2M803.5,427.2V446.9 M804.5,413.9V432.1M804.5,435.1V448.4 M805.5,413.0V451.6 M806.5,419.3V455.2 M807.5,415.5V454.6 M808.5,420.9V456.4 M809.5,420.9V434.2M809.5,437.2V454.8 M810.5,424.9V438.0M810.5,441.0V443.8 M811.5,424.9V431.7M811.5,434.7V439.4 M821.0,389V403 M824.5,407.8V443.1 M825.5,414.4V455.1 M826.5,413.1V423.7M826.5,426.7V446.2 M827.5,413.1V452.1 M828.5,415.5V457.7 M829.5,417.3V449.0 M830.5,418.4V452.4 M831.5,420.9V435.4M831.5,438.4V446.5 M832.5,419.1V450.2 M833.5,420.6V451.8 M834.5,423.3V449.5 M845.5,389V403 M849.5,412.6V441.9 M850.5,409.0V454.5 M851.5,415.3V450.6 M852.5,415.6V451.5 M853.5,413.8V449.6 M854.5,417.9V451.5 M855.5,420.9V431.5M855.5,434.5V448.8 M856.5,416.6V451.6 M857.5,419.9V447.1 M858.5,419.7V443.8 M859.5,424.4V439.6 M869.0,389V403 M872.5,407.8V445.6 M873.5,410.6V443.5 M874.5,410.7V418.3M874.5,421.3V446.7 M875.5,412.0V458.7 M876.5,418.5V452.1 M877.5,415.7V450.9 M878.5,419.2V448.6 M879.5,421.5V446.7 M880.5,421.7V434.7M880.5,437.7V444.3 M881.5,421.7V445.0 M882.5,421.4V439.0 M893.5,389V403 M897.5,412.7V445.8 M898.5,410.1V449.4 M899.5,410.8V420.1M899.5,423.1V445.9 M900.5,416.5V447.1 M901.5,414.3V455.7 M902.5,418.3V440.3M902.5,443.3V453.5 M903.5,416.5V457.1 M904.5,420.1V446.4 M905.5,421.2V447.3 M906.5,420.3V441.3 M907.5,421.6V441.8 M917.0,389V403 M920.5,410.4V444.6 M921.5,412.7V447.0 M922.5,411.7V452.0 M923.5,416.7V447.9 M924.5,417.8V443.3M924.5,446.3V453.4 M925.5,415.9V451.2 M926.5,419.7V429.6M926.5,432.6V448.6 M927.5,419.3V446.9 M928.5,419.7V444.1 M929.5,420.8V437.3M929.5,440.3V443.1 M930.5,423.6V442.7 M941.5,389V403 M945.5,407.8V446.6 M946.5,409.7V421.3M946.5,424.3V449.1 M947.5,414.6V424.0M947.5,427.0V447.0 M948.5,416.0V447.5 M949.5,414.5V453.7 M950.5,415.0V456.2 M951.5,415.3V456.5 M952.5,417.6V446.3 M953.5,423.1V446.4 M954.5,422.9V444.9 M955.5,422.8V431.1M955.5,434.1V440.6 M965.0,389V403 M968.5,412.6V428.6M968.5,431.6V443.0 M969.5,413.3V452.2 M970.5,412.0V445.8 M971.5,415.2V452.1 M972.5,416.0V454.4 M973.5,417.8V449.8 M974.5,420.6V436.7M974.5,439.7V448.0 M975.5,416.8V448.9 M976.5,422.5V444.7 M977.5,419.9V442.8 M978.5,423.7V444.9 M989.5,389V403 M993.5,407.4V420.3M993.5,423.3V440.7 M994.5,411.8V448.2 M995.5,412.1V435.6M995.5,438.6V454.9 M996.5,415.9V447.5 M997.5,416.7V456.2 M998.5,417.2V448.6 M999.5,418.1V452.6 M1000.5,420.7V430.0M1000.5,433.0V447.4 M1001.5,422.1V438.1M1001.5,441.1V444.0 M1002.5,422.7V447.1 M1003.5,420.5V443.7 M1013.0,389V403 M1016.5,410.4V429.2M1016.5,432.2V444.0 M1017.5,410.1V448.4 M1018.5,412.4V423.5M1018.5,426.5V450.7 M1019.5,413.4V452.9 M1020.5,416.8V455.7 M1021.5,414.1V452.4 M1022.5,421.0V454.3 M1023.5,419.6V455.9 M1024.5,423.2V448.3 M1025.5,419.4V442.5 M1026.5,420.7V445.6 M1037.5,389V403 M1041.5,407.4V444.8 M1042.5,408.7V445.1 M1043.5,411.9V450.9 M1044.5,414.2V435.2M1044.5,438.2V455.8 M1045.5,418.2V454.3 M1046.5,416.9V427.3M1046.5,430.3V449.1 M1047.5,421.1V454.3 M1048.5,416.5V447.6 M1049.5,423.0V437.1M1049.5,440.1V450.7 M1050.5,420.5V430.9M1050.5,433.9V446.4 M1051.5,424.8V441.5 M1061.0,389V403 M1064.5,408.4V444.2 M1065.5,411.8V444.8 M1066.5,410.7V450.2 M1067.5,417.0V450.8 M1068.5,414.5V441.3M1068.5,444.3V448.5 M1069.5,417.8V454.6 M1070.5,416.4V447.9 M1071.5,418.0V447.8 M1072.5,422.6V447.0 M1073.5,423.7V430.3M1073.5,433.3V453.0 M1074.5,425.0V440.5 M1085.5,389V403 M1089.5,412.4V440.8 M1090.5,411.8V448.6 M1091.5,414.1V423.4M1091.5,426.4V447.8 M1092.5,414.3V421.6M1092.5,424.6V448.4 M1093.5,417.8V448.3 M1094.5,418.8V452.5 M1095.5,415.8V453.1 M1096.5,422.2V451.3 M1097.5,418.0V447.7 M1098.5,423.4V443.9 M1099.5,423.5V431.7M1099.5,434.7V441.6 M1109.0,389V403 M1112.5,411.2V440.9 M1113.5,411.1V442.8 M1114.5,413.4V451.5 M1115.5,412.2V455.0 M1116.5,417.0V457.4 M1117.5,419.4V438.3M1117.5,441.3V450.4 M1118.5,417.8V450.5 M1119.5,420.2V432.8M1119.5,435.8V453.0 M1120.5,419.9V430.6M1120.5,433.6V450.5 M1121.5,420.7V427.6M1121.5,430.6V446.0 M1122.5,421.1V441.3 M1133.5,389V403 M1137.5,413.2V430.4M1137.5,433.4V442.7 M1138.5,413.9V450.1 M1139.5,410.3V455.0 M1140.5,415.6V453.8 M1141.5,418.3V457.3 M1142.5,415.7V453.0 M1143.5,417.5V450.3 M1144.5,420.6V451.8 M1145.5,420.0V443.9 M1146.5,420.8V451.6 M1147.5,424.3V447.8 M1157.0,389V403 M1160.5,410.7V445.4 M1161.5,413.0V447.8 M1162.5,413.9V447.7 M1163.5,413.5V449.2 M1164.5,418.1V448.2 M1165.5,418.1V453.0 M1166.5,420.4V456.9 M1167.5,419.3V449.2 M1168.5,423.2V445.1 M1169.5,422.4V446.4 M1170.5,425.0V441.7 M1181.5,389V403 M1185.5,412.7V443.5 M1186.5,410.9V449.6 M1187.5,412.1V448.0 M1188.5,416.3V447.2 M1189.5,416.4V449.9 M1190.5,416.8V455.8 M1191.5,418.9V452.4 M1192.5,418.4V447.8 M1193.5,422.2V452.7 M1194.5,423.1V439.3M1194.5,442.3V445.1 M1195.5,422.7V444.6 M1205.0,389V403 M1208.5,409.8V434.9M1208.5,437.9V443.8 M1209.5,408.8V448.0 M1210.5,412.1V449.5 M1211.5,414.7V454.1 M1212.5,416.6V424.9M1212.5,427.9V448.9 M1213.5,419.1V454.3 M1214.5,418.2V452.0 M1215.5,418.2V448.8 M1216.5,420.1V445.4 M1217.5,420.7V433.3M1217.5,436.3V445.3 M1218.5,424.4V443.3 M1229.5,389V403 M1233.5,412.5V445.3 M1234.5,414.3V435.1M1234.5,438.1V443.3 M1235.5,410.2V449.9 M1236.5,415.7V446.5M1236.5,449.5V453.6 M1237.5,415.5V455.1 M1238.5,417.9V451.3 M1239.5,420.3V449.6 M1240.5,421.3V436.7M1240.5,439.7V450.9 M1241.5,421.2V444.0 M1242.5,422.3V446.4 M1243.5,420.6V427.5M1243.5,430.5V445.7 M1253.0,389V403 M1256.5,410.5V427.8M1256.5,430.8V443.0 M1257.5,408.9V426.0M1257.5,429.0V443.7 M1258.5,415.2V439.2M1258.5,442.2V454.1 M1259.5,414.1V458.6 M1260.5,417.6V450.8 M1261.5,415.3V450.9 M1262.5,420.9V434.5M1262.5,437.5V452.2 M1263.5,418.9V455.0 M1264.5,421.3V445.9 M1265.5,422.3V447.9 M1266.5,424.7V448.3 M1277.5,389V403" stroke="#30f830" stroke-width="1" fill="none"/><path d="M12.5,442.0V444.0 M14.5,446.8V448.8 M18.5,430.1V432.1 M34.5,428.2V430.2 M39.5,440.7V442.7 M56.5,424.7V426.7 M57.5,431.5V433.5 M60.5,441.7V443.7 M61.5,423.1V425.1 M64.5,436.5V438.5 M65.5,440.0V442.0 M84.5,417.3V419.3 M86.5,442.4V444.4 M87.5,433.0V435.0 M88.5,441.7V443.7 M90.5,433.5V435.5 M104.5,431.7V433.7 M110.5,430.8V432.8 M113.5,440.4V442.4 M129.5,423.6V425.6 M137.5,432.1V434.1 M138.5,438.9V440.9 M152.5,440.2V442.2 M153.5,418.4V420.4 M154.5,439.4V441.4 M156.5,434.6V436.6 M157.5,432.0V434.0 M158.5,425.5V427.5 M159.5,445.0V447.0 M160.5,433.7V435.7 M161.5,437.1V439.1 M162.5,428.9V430.9 M177.5,427.8V429.8 M180.5,433.8V435.8 M181.5,437.2V439.2 M182.5,425.0V427.0 M186.5,437.8V439.8 M187.5,437.8V439.8 M202.5,440.4V442.4 M204.5,447.1V449.1 M206.5,424.4V426.4 M226.5,417.4V419.4 M228.5,440.7V442.7 M229.5,427.7V429.7 M230.5,442.6V444.6 M254.5,438.4V440.4 M255.5,427.1V429.1 M274.5,425.2V427.2 M275.5,429.7V431.7 M279.5,439.5V441.5 M280.5,427.9V429.9 M281.5,429.2V431.2 M297.5,430.8V432.8 M299.5,438.8V440.8 M300.5,422.3V424.3 M301.5,425.6V427.6 M303.5,441.4V443.4 M304.5,440.9V442.9 M305.5,430.0V432.0 M329.5,426.2V428.2 M331.5,428.1V430.1 M352.5,437.1V439.1 M354.5,438.1V440.1 M369.5,419.3V421.3 M370.5,421.3V423.3 M375.5,421.2V423.2 M376.5,443.2V445.2 M393.5,440.6V442.6 M395.5,438.7V440.7 M397.5,437.2V439.2 M419.5,429.1V431.1 M424.5,440.6V442.6 M426.5,432.4V434.4 M440.5,426.7V428.7 M442.5,438.8V440.8 M444.5,440.0V442.0 M446.5,424.6V426.6 M447.5,445.8V447.8 M448.5,440.7V442.7 M465.5,438.0V440.0 M467.5,427.6V429.6 M471.5,425.0V427.0 M473.5,435.5V437.5 M489.5,420.0V422.0 M490.5,423.2V425.2 M493.5,441.2V443.2 M494.5,430.4V432.4 M513.5,433.3V435.3 M514.5,430.3V432.3 M516.5,421.1V423.1 M520.5,438.3V440.3 M536.5,416.2V418.2 M542.5,447.4V449.4 M544.5,429.2V431.2 M545.5,434.6V436.6 M561.5,418.9V420.9 M565.5,432.4V434.4 M570.5,427.9V429.9 M584.5,417.6V419.6 M585.5,430.7V432.7 M586.5,438.2V440.2 M593.5,436.3V438.3 M594.5,432.9V434.9 M614.5,420.6V422.6 M615.5,431.9V433.9 M619.5,429.8V431.8 M635.5,435.8V437.8 M636.5,434.8V436.8 M637.5,423.7V425.7 M638.5,438.5V440.5 M657.5,417.1V419.1 M658.5,440.1V442.1 M666.5,438.4V440.4 M667.5,431.4V433.4 M681.5,430.4V432.4 M685.5,420.7V422.7 M687.5,435.4V437.4 M690.5,438.0V440.0 M705.5,416.8V418.8 M707.5,431.6V433.6 M709.5,426.8V428.8 M713.5,436.9V438.9 M715.5,436.2V438.2 M735.5,425.9V427.9 M736.5,441.7V443.7 M737.5,432.8V434.8 M755.5,425.8V427.8 M757.5,419.5V421.5 M760.5,436.6V438.6 M778.5,444.8V446.8 M781.5,439.5V441.5 M782.5,426.1V428.1 M810.5,428.4V430.4 M827.5,444.1V446.1 M829.5,436.5V438.5 M831.5,427.9V429.9 M833.5,436.7V438.7 M834.5,442.8V444.8 M854.5,433.2V435.2 M856.5,446.6V448.6 M858.5,440.1V442.1 M875.5,437.1V439.1 M876.5,447.9V449.9 M881.5,429.5V431.5 M882.5,428.6V430.6 M897.5,417.5V419.5 M899.5,437.1V439.1 M901.5,449.7V451.7 M905.5,434.6V436.6 M926.5,426.8V428.8 M927.5,437.1V439.1 M930.5,434.4V436.4 M946.5,443.4V445.4 M950.5,443.5V445.5 M952.5,439.6V441.6 M954.5,434.6V436.6 M971.5,448.9V450.9 M975.5,433.1V435.1 M976.5,428.9V430.9 M978.5,433.0V435.0 M994.5,429.3V431.3 M1000.5,431.0V433.0 M1003.5,424.9V426.9 M1024.5,435.0V437.0 M1025.5,429.8V431.8 M1045.5,443.9V445.9 M1048.5,436.4V438.4 M1049.5,428.7V430.7 M1050.5,441.9V443.9 M1051.5,430.5V432.5 M1065.5,427.9V429.9 M1070.5,433.7V435.7 M1074.5,435.2V437.2 M1089.5,423.8V425.8 M1091.5,432.4V434.4 M1097.5,435.4V437.4 M1113.5,439.3V441.3 M1117.5,443.1V445.1 M1118.5,439.3V441.3 M1120.5,433.9V435.9 M1121.5,429.7V431.7 M1139.5,413.4V415.4 M1140.5,444.7V446.7 M1145.5,440.8V442.8 M1163.5,432.7V434.7 M1165.5,445.8V447.8 M1170.5,428.0V430.0 M1191.5,436.8V438.8 M1195.5,435.6V437.6 M1208.5,419.8V421.8 M1209.5,421.4V423.4 M1210.5,416.5V418.5 M1211.5,448.6V450.6 M1215.5,431.9V433.9 M1216.5,432.3V434.3 M1217.5,435.7V437.7 M1233.5,427.9V429.9 M1234.5,428.5V430.5 M1237.5,421.8V423.8 M1241.5,438.6V440.6 M1243.5,427.0V429.0 M1256.5,416.0V418.0 M1257.5,433.1V435.1 M1261.5,428.8V430.8 M1262.5,447.9V449.9 M1263.5,445.6V447.6 M1266.5,429.3V431.3" stroke="#b0ffb0" stroke-width="1" fill="none"/><path d="M8.0,360 V409 M26.5,401 L32.3,359 M33.0,356 V409 M50.0,401 L55.8,365.5 M56.0,362.5 V409 M74.5,401 L80.3,359 M81.0,356 V409 M98.0,401 L103.8,363 M104.0,360 V409 M122.5,401 L128.3,359 M129.0,356 V409 M146.0,401 L151.8,365.5 M152.0,362.5 V409 M170.5,401 L176.3,359 M177.0,356 V409 M194.0,401 L199.8,363 M200.0,360 V409 M218.5,401 L224.3,359 M225.0,356 V409 M242.0,401 L247.8,365.5 M248.0,362.5 V409 M266.5,401 L272.3,359 M273.0,356 V409 M290.0,401 L295.8,363 M296.0,360 V409 M314.5,401 L320.3,359 M321.0,356 V409 M338.0,401 L343.8,365.5 M344.0,362.5 V409 M362.5,401 L368.3,359 M369.0,356 V409 M386.0,401 L391.8,363 M392.0,360 V409 M410.5,401 L416.3,359 M417.0,356 V409 M434.0,401 L439.8,365.5 M440.0,362.5 V409 M458.5,401 L464.3,359 M465.0,356 V409 M482.0,401 L487.8,363 M488.0,360 V409 M506.5,401 L512.3,359 M513.0,356 V409 M530.0,401 L535.8,365.5 M536.0,362.5 V409 M554.5,401 L560.3,359 M561.0,356 V409 M578.0,401 L583.8,363 M584.0,360 V409 M602.5,401 L608.3,359 M609.0,356 V409 M626.0,401 L631.8,365.5 M632.0,362.5 V409 M650.5,401 L656.3,359 M657.0,356 V409 M674.0,401 L679.8,363 M680.0,360 V409 M698.5,401 L704.3,359 M705.0,356 V409 M722.0,401 L727.8,365.5 M728.0,362.5 V409 M746.5,401 L752.3,359 M753.0,356 V409 M770.0,401 L775.8,363 M776.0,360 V409 M794.5,401 L800.3,359 M801.0,356 V409 M818.0,401 L823.8,365.5 M824.0,362.5 V409 M842.5,401 L848.3,359 M849.0,356 V409 M866.0,401 L871.8,363 M872.0,360 V409 M890.5,401 L896.3,359 M897.0,356 V409 M914.0,401 L919.8,365.5 M920.0,362.5 V409 M938.5,401 L944.3,359 M945.0,356 V409 M962.0,401 L967.8,363 M968.0,360 V409 M986.5,401 L992.3,359 M993.0,356 V409 M1010.0,401 L1015.8,365.5 M1016.0,362.5 V409 M1034.5,401 L1040.3,359 M1041.0,356 V409 M1058.0,401 L1063.8,363 M1064.0,360 V409 M1082.5,401 L1088.3,359 M1089.0,356 V409 M1106.0,401 L1111.8,365.5 M1112.0,362.5 V409 M1130.5,401 L1136.3,359 M1137.0,356 V409 M1154.0,401 L1159.8,363 M1160.0,360 V409 M1178.5,401 L1184.3,359 M1185.0,356 V409 M1202.0,401 L1207.8,365.5 M1208.0,362.5 V409 M1226.5,401 L1232.3,359 M1233.0,356 V409 M1250.0,401 L1255.8,363 M1256.0,360 V409 M1274.5,401 L1280.3,359" stroke="#30f830" stroke-width="1.7" fill="none"/><path d="M8.0,360 V443 M18.5,439 L26.5,401 M33.0,356 V443 M43.5,439 L50.0,401 M56.0,362.5 V443 M66.5,439 L74.5,401 M81.0,356 V443 M91.5,439 L98.0,401 M104.0,360 V443 M114.5,439 L122.5,401 M129.0,356 V443 M139.5,439 L146.0,401 M152.0,362.5 V443 M162.5,439 L170.5,401 M177.0,356 V443 M187.5,439 L194.0,401 M200.0,360 V443 M210.5,439 L218.5,401 M225.0,356 V443 M235.5,439 L242.0,401 M248.0,362.5 V443 M258.5,439 L266.5,401 M273.0,356 V443 M283.5,439 L290.0,401 M296.0,360 V443 M306.5,439 L314.5,401 M321.0,356 V443 M331.5,439 L338.0,401 M344.0,362.5 V443 M354.5,439 L362.5,401 M369.0,356 V443 M379.5,439 L386.0,401 M392.0,360 V443 M402.5,439 L410.5,401 M417.0,356 V443 M427.5,439 L434.0,401 M440.0,362.5 V443 M450.5,439 L458.5,401 M465.0,356 V443 M475.5,439 L482.0,401 M488.0,360 V443 M498.5,439 L506.5,401 M513.0,356 V443 M523.5,439 L530.0,401 M536.0,362.5 V443 M546.5,439 L554.5,401 M561.0,356 V443 M571.5,439 L578.0,401 M584.0,360 V443 M594.5,439 L602.5,401 M609.0,356 V443 M619.5,439 L626.0,401 M632.0,362.5 V443 M642.5,439 L650.5,401 M657.0,356 V443 M667.5,439 L674.0,401 M680.0,360 V443 M690.5,439 L698.5,401 M705.0,356 V443 M715.5,439 L722.0,401 M728.0,362.5 V443 M738.5,439 L746.5,401 M753.0,356 V443 M763.5,439 L770.0,401 M776.0,360 V443 M786.5,439 L794.5,401 M801.0,356 V443 M811.5,439 L818.0,401 M824.0,362.5 V443 M834.5,439 L842.5,401 M849.0,356 V443 M859.5,439 L866.0,401 M872.0,360 V443 M882.5,439 L890.5,401 M897.0,356 V443 M907.5,439 L914.0,401 M920.0,362.5 V443 M930.5,439 L938.5,401 M945.0,356 V443 M955.5,439 L962.0,401 M968.0,360 V443 M978.5,439 L986.5,401 M993.0,356 V443 M1003.5,439 L1010.0,401 M1016.0,362.5 V443 M1026.5,439 L1034.5,401 M1041.0,356 V443 M1051.5,439 L1058.0,401 M1064.0,360 V443 M1074.5,439 L1082.5,401 M1089.0,356 V443 M1099.5,439 L1106.0,401 M1112.0,362.5 V443 M1122.5,439 L1130.5,401 M1137.0,356 V443 M1147.5,439 L1154.0,401 M1160.0,360 V443 M1170.5,439 L1178.5,401 M1185.0,356 V443 M1195.5,439 L1202.0,401 M1208.0,362.5 V443 M1218.5,439 L1226.5,401 M1233.0,356 V443 M1243.5,439 L1250.0,401 M1256.0,360 V443 M1266.5,439 L1274.5,401" stroke="#30f830" stroke-width="1.6" fill="none"/><path d="M8.0,360 V443 M18.5,439 L26.5,401 M33.0,356 V443 M43.5,439 L50.0,401 M56.0,362.5 V443 M66.5,439 L74.5,401 M81.0,356 V443 M91.5,439 L98.0,401 M104.0,360 V443 M114.5,439 L122.5,401 M129.0,356 V443 M139.5,439 L146.0,401 M152.0,362.5 V443 M162.5,439 L170.5,401 M177.0,356 V443 M187.5,439 L194.0,401 M200.0,360 V443 M210.5,439 L218.5,401 M225.0,356 V443 M235.5,439 L242.0,401 M248.0,362.5 V443 M258.5,439 L266.5,401 M273.0,356 V443 M283.5,439 L290.0,401 M296.0,360 V443 M306.5,439 L314.5,401 M321.0,356 V443 M331.5,439 L338.0,401 M344.0,362.5 V443 M354.5,439 L362.5,401 M369.0,356 V443 M379.5,439 L386.0,401 M392.0,360 V443 M402.5,439 L410.5,401 M417.0,356 V443 M427.5,439 L434.0,401 M440.0,362.5 V443 M450.5,439 L458.5,401 M465.0,356 V443 M475.5,439 L482.0,401 M488.0,360 V443 M498.5,439 L506.5,401 M513.0,356 V443 M523.5,439 L530.0,401 M536.0,362.5 V443 M546.5,439 L554.5,401 M561.0,356 V443 M571.5,439 L578.0,401 M584.0,360 V443 M594.5,439 L602.5,401 M609.0,356 V443 M619.5,439 L626.0,401 M632.0,362.5 V443 M642.5,439 L650.5,401 M657.0,356 V443 M667.5,439 L674.0,401 M680.0,360 V443 M690.5,439 L698.5,401 M705.0,356 V443 M715.5,439 L722.0,401 M728.0,362.5 V443 M738.5,439 L746.5,401 M753.0,356 V443 M763.5,439 L770.0,401 M776.0,360 V443 M786.5,439 L794.5,401 M801.0,356 V443 M811.5,439 L818.0,401 M824.0,362.5 V443 M834.5,439 L842.5,401 M849.0,356 V443 M859.5,439 L866.0,401 M872.0,360 V443 M882.5,439 L890.5,401 M897.0,356 V443 M907.5,439 L914.0,401 M920.0,362.5 V443 M930.5,439 L938.5,401 M945.0,356 V443 M955.5,439 L962.0,401 M968.0,360 V443 M978.5,439 L986.5,401 M993.0,356 V443 M1003.5,439 L1010.0,401 M1016.0,362.5 V443 M1026.5,439 L1034.5,401 M1041.0,356 V443 M1051.5,439 L1058.0,401 M1064.0,360 V443 M1074.5,439 L1082.5,401 M1089.0,356 V443 M1099.5,439 L1106.0,401 M1112.0,362.5 V443 M1122.5,439 L1130.5,401 M1137.0,356 V443 M1147.5,439 L1154.0,401 M1160.0,360 V443 M1170.5,439 L1178.5,401 M1185.0,356 V443 M1195.5,439 L1202.0,401 M1208.0,362.5 V443 M1218.5,439 L1226.5,401 M1233.0,356 V443 M1243.5,439 L1250.0,401 M1256.0,360 V443 M1266.5,439 L1274.5,401" stroke="#c8ffc8" stroke-width="0.6" fill="none"/></g></svg><g shape-rendering="crispEdges"><rect x="70" y="2" width="1" height="18" fill="#fff"/><rect x="71" y="2" width="1" height="9" fill="#fff"/><rect x="71" y="17" width="1" height="3" fill="#fff"/><rect x="70" y="26" width="1" height="18" fill="#fff"/><rect x="71" y="26" width="1" height="9" fill="#fff"/><rect x="71" y="41" width="1" height="3" fill="#fff"/><rect x="70" y="50" width="1" height="18" fill="#fff"/><rect x="71" y="50" width="1" height="9" fill="#fff"/><rect x="71" y="65" width="1" height="3" fill="#fff"/><rect x="70" y="74" width="1" height="18" fill="#fff"/><rect x="71" y="74" width="1" height="9" fill="#fff"/><rect x="71" y="89" width="1" height="3" fill="#fff"/><rect x="70" y="98" width="1" height="18" fill="#fff"/><rect x="71" y="98" width="1" height="9" fill="#fff"/><rect x="71" y="113" width="1" height="3" fill="#fff"/><rect x="70" y="122" width="1" height="18" fill="#fff"/><rect x="71" y="122" width="1" height="9" fill="#fff"/><rect x="71" y="137" width="1" height="3" fill="#fff"/><rect x="70" y="146" width="1" height="18" fill="#fff"/><rect x="71" y="146" width="1" height="9" fill="#fff"/><rect x="71" y="161" width="1" height="3" fill="#fff"/><rect x="70" y="170" width="1" height="18" fill="#fff"/><rect x="71" y="170" width="1" height="9" fill="#fff"/><rect x="71" y="185" width="1" height="3" fill="#fff"/><rect x="70" y="194" width="1" height="18" fill="#fff"/><rect x="71" y="194" width="1" height="9" fill="#fff"/><rect x="71" y="209" width="1" height="3" fill="#fff"/><rect x="70" y="218" width="1" height="18" fill="#fff"/><rect x="71" y="218" width="1" height="9" fill="#fff"/><rect x="71" y="233" width="1" height="3" fill="#fff"/><rect x="70" y="242" width="1" height="18" fill="#fff"/><rect x="71" y="242" width="1" height="9" fill="#fff"/><rect x="71" y="257" width="1" height="3" fill="#fff"/><rect x="70" y="266" width="1" height="18" fill="#fff"/><rect x="71" y="266" width="1" height="9" fill="#fff"/><rect x="71" y="281" width="1" height="3" fill="#fff"/><rect x="70" y="290" width="1" height="18" fill="#fff"/><rect x="71" y="290" width="1" height="9" fill="#fff"/><rect x="71" y="305" width="1" height="3" fill="#fff"/><rect x="70" y="314" width="1" height="18" fill="#fff"/><rect x="71" y="314" width="1" height="9" fill="#fff"/><rect x="71" y="329" width="1" height="3" fill="#fff"/><rect x="70" y="338" width="1" height="18" fill="#fff"/><rect x="71" y="338" width="1" height="9" fill="#fff"/><rect x="71" y="353" width="1" height="3" fill="#fff"/><rect x="70" y="362" width="1" height="18" fill="#fff"/><rect x="71" y="362" width="1" height="9" fill="#fff"/><rect x="71" y="377" width="1" height="3" fill="#fff"/><rect x="70" y="386" width="1" height="18" fill="#fff"/><rect x="71" y="386" width="1" height="9" fill="#fff"/><rect x="71" y="401" width="1" height="3" fill="#fff"/><rect x="70" y="410" width="1" height="18" fill="#fff"/><rect x="71" y="410" width="1" height="9" fill="#fff"/><rect x="71" y="425" width="1" height="3" fill="#fff"/><rect x="70" y="434" width="1" height="18" fill="#fff"/><rect x="71" y="434" width="1" height="9" fill="#fff"/><rect x="71" y="449" width="1" height="3" fill="#fff"/><rect x="70" y="458" width="1" height="18" fill="#fff"/><rect x="71" y="458" width="1" height="9" fill="#fff"/><rect x="71" y="473" width="1" height="3" fill="#fff"/><rect x="70" y="482" width="1" height="18" fill="#fff"/><rect x="71" y="482" width="1" height="9" fill="#fff"/><rect x="71" y="497" width="1" height="3" fill="#fff"/><rect x="70" y="506" width="1" height="18" fill="#fff"/><rect x="71" y="506" width="1" height="9" fill="#fff"/><rect x="71" y="521" width="1" height="3" fill="#fff"/></g><g fill="#f0f000" font-size="12.5"><text x="65.3" y="15" text-anchor="end" textLength="35.5" lengthAdjust="spacingAndGlyphs">8.05 A</text><text x="65.3" y="75.5" text-anchor="end" textLength="35.5" lengthAdjust="spacingAndGlyphs">6.05 A</text><text x="65.3" y="142.5" text-anchor="end" textLength="35.5" lengthAdjust="spacingAndGlyphs">4.05 A</text><text x="65.3" y="210.5" text-anchor="end" textLength="35.5" lengthAdjust="spacingAndGlyphs">2.05 A</text><text x="65.3" y="278.5" text-anchor="end" textLength="36" lengthAdjust="spacingAndGlyphs">50 mA</text><text x="65.3" y="345.5" text-anchor="end" textLength="39.5" lengthAdjust="spacingAndGlyphs">-1.95 A</text><text x="65.3" y="412.5" text-anchor="end" textLength="39.5" lengthAdjust="spacingAndGlyphs">-3.95 A</text><text x="65.3" y="480.5" text-anchor="end" textLength="39.5" lengthAdjust="spacingAndGlyphs">-5.95 A</text><text x="65.3" y="541" text-anchor="end" textLength="39.5" lengthAdjust="spacingAndGlyphs">-7.95 A</text><text x="70" y="556.5" text-anchor="start">-50 ms</text><text x="190" y="556.5" text-anchor="middle">-40 ms</text><text x="310" y="556.5" text-anchor="middle">-30 ms</text><text x="430" y="556.5" text-anchor="middle">-20 ms</text><text x="550" y="556.5" text-anchor="middle">-10 ms</text><text x="670" y="556.5" text-anchor="middle">0 ps</text><text x="790" y="556.5" text-anchor="middle">10 ms</text><text x="910" y="556.5" text-anchor="middle">20 ms</text><text x="1030" y="556.5" text-anchor="middle">30 ms</text><text x="1150" y="556.5" text-anchor="middle">40 ms</text><text x="1270" y="556.5" text-anchor="end">50 ms</text></g><rect x="70" y="142.0" width="2" height="27" fill="#fff"/><polygon points="72,150.0 77,150.0 72,155.5 77,161.0 72,161.0" fill="#fff"/><text x="57" y="171" font-size="9.3" textLength="11.5" lengthAdjust="spacingAndGlyphs" fill="#00c800">C4</text><rect x="60" y="173" width="10" height="2" fill="#00c800"/><rect x="70" y="403.0" width="2" height="27" fill="#fff"/><polygon points="72,411.0 77,411.0 72,416.5 77,422.0 72,422.0" fill="#fff"/><text x="57.3" y="430" font-size="9.3" textLength="11.3" lengthAdjust="spacingAndGlyphs" fill="#d8ffd8">C5</text><rect x="60" y="432" width="10" height="2" fill="#d8ffd8"/><rect x="54" y="261" width="16" height="11" rx="2" fill="#f0f000"/><text x="57.3" y="270.5" font-size="10" fill="#222">C1</text><rect x="59" y="273" width="11" height="2" fill="#f0f000"/><rect x="70" y="295.0" width="2" height="27" fill="#fff"/><polygon points="72,303.0 77,303.0 72,308.5 77,314.0 72,314.0" fill="#fff"/><text x="76" y="292" font-size="11" fill="#fff">AOUT1_CURRENT</text><rect x="76" y="294" width="98" height="1" fill="#fff"/><line x1="122" y1="295" x2="72" y2="308.5" stroke="#fff" stroke-width="1.2"/><text x="1182" y="140.6" font-size="11" fill="#fff">Torque_Sensor</text><rect x="1181" y="143" width="78" height="1" fill="#fff"/><line x1="1224" y1="143.5" x2="1269" y2="148.5" stroke="#fff" stroke-width="1.2"/><text x="1197" y="397.7" font-size="11" fill="#fff">VM_Current</text><rect x="1197" y="400" width="61" height="1" fill="#fff"/><line x1="1229" y1="401" x2="1269" y2="415.6" stroke="#fff" stroke-width="1.2"/><text x="74" y="539" font-size="11" font-weight="bold" fill="#fff">C5</text><polygon points="670.5,543 674,550.5 667,550.5" fill="#f0f000"/><rect x="670" y="550" width="1.5" height="9" fill="#f0f000"/><g font-size="13"><rect x="3" y="589" width="1261" height="1" fill="#909090"/><rect x="3" y="590" width="1261" height="15" fill="#1e1e1e"/><text x="5" y="586.7" font-weight="bold" fill="#fff">Measure</text><text x="5" y="602.5" fill="#fff">value</text><text x="5" y="618.5" fill="#fff">status</text><text x="196" y="586.8" text-anchor="end" fill="#fff">P1:max(C1)</text><text x="196" y="602.9" text-anchor="end" fill="#fff">2.55 A</text><polyline points="185,613 188.5,616.5 195,609.5" fill="none" stroke="#10f010" stroke-width="2.6"/><text x="293" y="586.8" text-anchor="end" fill="#fff">P2:pkpk(C4)</text><text x="293" y="602.9" text-anchor="end" fill="#fff">952 mV</text><polyline points="282,613 285.5,616.5 292,609.5" fill="none" stroke="#10f010" stroke-width="2.6"/><text x="390" y="586.8" text-anchor="end" fill="#fff">P3:mean(C5)</text><text x="390" y="602.9" text-anchor="end" fill="#fff">609 mA</text><polyline points="379,613 382.5,616.5 389,609.5" fill="none" stroke="#10f010" stroke-width="2.6"/><text x="487" y="586.8" text-anchor="end" fill="#fff">P4:min(C4)</text><text x="487" y="602.9" text-anchor="end" fill="#fff">100 mV</text><polyline points="476,613 479.5,616.5 486,609.5" fill="none" stroke="#10f010" stroke-width="2.6"/><text x="584" y="586.8" text-anchor="end" fill="#fff">P5:max(C4)</text><text x="584" y="602.9" text-anchor="end" fill="#fff">1.05 V</text><polyline points="573,613 576.5,616.5 583,609.5" fill="none" stroke="#10f010" stroke-width="2.6"/><text x="681" y="586.8" text-anchor="end" fill="#fff">P6:rms(C1)</text><text x="681" y="602.9" text-anchor="end" fill="#fff">1.365 A</text><polyline points="670,613 673.5,616.5 680,609.5" fill="none" stroke="#10f010" stroke-width="2.6"/><text x="778" y="586.8" text-anchor="end" fill="#fff">P7:rms(C5)</text><text x="778" y="602.9" text-anchor="end" fill="#fff">866 mA</text><polyline points="767,613 770.5,616.5 777,609.5" fill="none" stroke="#10f010" stroke-width="2.6"/><text x="875" y="586.8" text-anchor="end" fill="#fff">P8:freq(C1)</text><text x="875" y="602.9" text-anchor="end" fill="#fff">125.66214 Hz</text><g fill="none"><path d="M866,609.5h6v2.5l-1.5,1.5 1.5,1.5v2.5h-6v-2.5l1.5,-1.5 -1.5,-1.5z" stroke="#ffffff" stroke-width="1.2"/><line x1="864.5" y1="608.5" x2="873.5" y2="617.5" stroke="#f0f000" stroke-width="1.4"/><line x1="873.5" y1="608.5" x2="864.5" y2="617.5" stroke="#f0f000" stroke-width="1.4"/></g><text x="972" y="586.8" text-anchor="end" fill="#6a6a6a">P9:- - -</text><text x="1069" y="586.8" text-anchor="end" fill="#6a6a6a">P10:freq(C5)</text><text x="1166" y="586.8" text-anchor="end" fill="#6a6a6a">P11:- - -</text><text x="1263" y="586.8" text-anchor="end" fill="#6a6a6a">P12:- - -</text></g><g font-size="13"><rect x="3" y="621" width="99" height="84" fill="#2e8fec"/><rect x="5" y="638" width="95" height="65" fill="#2a4762"/><rect x="4" y="622" width="97" height="16" fill="#ffff00"/><text x="8" y="635" font-size="13" fill="#1a1a00">C1</text><rect x="50" y="622.5" width="25.5" height="14.5" rx="2.5" fill="#000" stroke="#000"/><text x="62.75" y="633" text-anchor="middle" font-size="10" letter-spacing="0.4" fill="#ffff00">BwL</text><rect x="77" y="622.5" width="21" height="14.5" rx="2.5" fill="#000" stroke="#000"/><text x="87.5" y="633" text-anchor="middle" font-size="10" letter-spacing="0.4" fill="#ffff00">DC</text><rect x="104" y="622" width="97" height="83" fill="#474747"/><rect x="104" y="622" width="97" height="16" fill="#00c000"/><text x="108" y="635" font-size="13" fill="#002000">C4</text><rect x="135" y="622.5" width="25.5" height="14.5" rx="2.5" fill="#000" stroke="#000"/><text x="147.75" y="633" text-anchor="middle" font-size="10" letter-spacing="0.4" fill="#00d000">BwL</text><rect x="162" y="622.5" width="36" height="14.5" rx="2.5" fill="#000" stroke="#000"/><text x="180.0" y="633" text-anchor="middle" font-size="10" letter-spacing="0.4" fill="#00d000">DC1M</text><rect x="204" y="622" width="97" height="83" fill="#474747"/><rect x="204" y="622" width="97" height="16" fill="#d8ffd8"/><text x="208" y="635" font-size="13" fill="#202020">C5</text><rect x="250" y="622.5" width="25.5" height="14.5" rx="2.5" fill="#000" stroke="#000"/><text x="262.75" y="633" text-anchor="middle" font-size="10" letter-spacing="0.4" fill="#e8ffe8">BwL</text><rect x="277" y="622.5" width="21" height="14.5" rx="2.5" fill="#000" stroke="#000"/><text x="287.5" y="633" text-anchor="middle" font-size="10" letter-spacing="0.4" fill="#e8ffe8">DC</text><text x="99" y="651.5" text-anchor="end" fill="#fff">2.00 A/div</text><text x="99" y="666.2" text-anchor="end" fill="#fff">-50.0 mA</text><text x="99" y="685.3" text-anchor="end" fill="#fff">-1.0370 A</text><text x="99" y="699.7" text-anchor="end" fill="#fff">-1.0370 A</text><g fill="none" stroke-width="1"><line x1="10.5" y1="677" x2="10.5" y2="689" stroke="#d8d4a0"/><polyline points="8.0,686 10.5,689 13.0,686" stroke="#f0f0f0"/><line x1="10.5" y1="692" x2="10.5" y2="704" stroke="#d8d4a0"/><polyline points="8.0,695 10.5,692 13.0,695" stroke="#f0f0f0"/></g><text x="199" y="651.5" text-anchor="end" fill="#fff">2.00 V/div</text><text x="199" y="666.2" text-anchor="end" fill="#fff">2.9000 V</text><text x="199" y="685.3" text-anchor="end" fill="#fff">529.0 mV</text><text x="199" y="699.7" text-anchor="end" fill="#fff">529.0 mV</text><g fill="none" stroke-width="1"><line x1="110.5" y1="677" x2="110.5" y2="689" stroke="#d8d4a0"/><polyline points="108.0,686 110.5,689 113.0,686" stroke="#f0f0f0"/><line x1="110.5" y1="692" x2="110.5" y2="704" stroke="#d8d4a0"/><polyline points="108.0,695 110.5,692 113.0,695" stroke="#f0f0f0"/></g><text x="299" y="651.5" text-anchor="end" fill="#fff">2.00 A/div</text><text x="299" y="666.2" text-anchor="end" fill="#fff">-4.7500 A</text><text x="299" y="685.3" text-anchor="end" fill="#fff">454.5 mA</text><text x="299" y="699.7" text-anchor="end" fill="#fff">454.5 mA</text><g fill="none" stroke-width="1"><line x1="210.5" y1="677" x2="210.5" y2="689" stroke="#d8d4a0"/><polyline points="208.0,686 210.5,689 213.0,686" stroke="#f0f0f0"/><line x1="210.5" y1="692" x2="210.5" y2="704" stroke="#d8d4a0"/><polyline points="208.0,695 210.5,692 213.0,695" stroke="#f0f0f0"/></g><rect x="304.5" y="622.5" width="96" height="82" fill="none" stroke="#555" stroke-width="1"/><rect x="304.5" y="622.5" width="96" height="82" fill="none" stroke="#fff" stroke-width="1" stroke-dasharray="4 3"/><rect x="344" y="662" width="14" height="2" fill="#fff"/><rect x="350" y="656" width="2" height="14" fill="#fff"/></g><g font-size="13"><rect x="1003" y="622" width="57" height="49" fill="#474747"/><rect x="1004" y="622" width="55" height="15" fill="#00f000"/><text x="1031.5" y="635" text-anchor="middle" font-weight="bold" fill="#000">HD</text><text x="1032.5" y="658.3" text-anchor="middle" fill="#fff">12 Bits</text><rect x="1063" y="622" width="112" height="49" fill="#474747"/><rect x="1064" y="622" width="110" height="15" fill="#fafafa"/><text x="1067" y="634.5" fill="#100020">Tbase</text><text x="1173" y="634.5" text-anchor="end" fill="#100020">0.0 ms</text><text x="1173" y="652.4" text-anchor="end" fill="#fff">10.0 ms/div</text><text x="1066" y="667.2" fill="#fff">50 MS</text><text x="1173" y="667.2" text-anchor="end" fill="#fff">500 MS/s</text><rect x="1178" y="622" width="97" height="49" fill="#474747"/><rect x="1179" y="622" width="95" height="15" fill="#fafafa"/><text x="1181" y="634.5" fill="#100020">Trigger</text><rect x="1229" y="623" width="18" height="13" rx="2.5" fill="#000"/><text x="1238" y="633.5" text-anchor="middle" font-size="11" fill="#fff">C3</text><rect x="1251" y="623" width="21" height="13" rx="2.5" fill="#000"/><text x="1261.5" y="633.5" text-anchor="middle" font-size="11" fill="#fff">DC</text><text x="1181" y="652.4" fill="#fff">Stop</text><text x="1272" y="652.4" text-anchor="end" fill="#fff">2.50 V</text><text x="1181" y="667.2" fill="#fff">Edge</text><text x="1272" y="667.2" text-anchor="end" fill="#fff">Positive</text><text x="1009" y="684.2" fill="#fff">X1=</text><text x="1042" y="684.2" fill="#fff">-50.000000 ms</text><text x="1172" y="684.2" text-anchor="end" fill="#fff">ΔX=</text><text x="1177" y="684.2" fill="#fff">0 ns</text><text x="1009" y="700" fill="#fff">X2=</text><text x="1042" y="700" fill="#fff">-50.000000 ms</text><text x="1172" y="700" text-anchor="end" fill="#fff">1/ΔX=</text><text x="1190" y="700" fill="#fff">---</text></g><rect x="0" y="706" width="1279" height="2" fill="#575c5e"/><rect x="0" y="708" width="1279" height="1" fill="#202020"/>
</svg>
</body></html>
